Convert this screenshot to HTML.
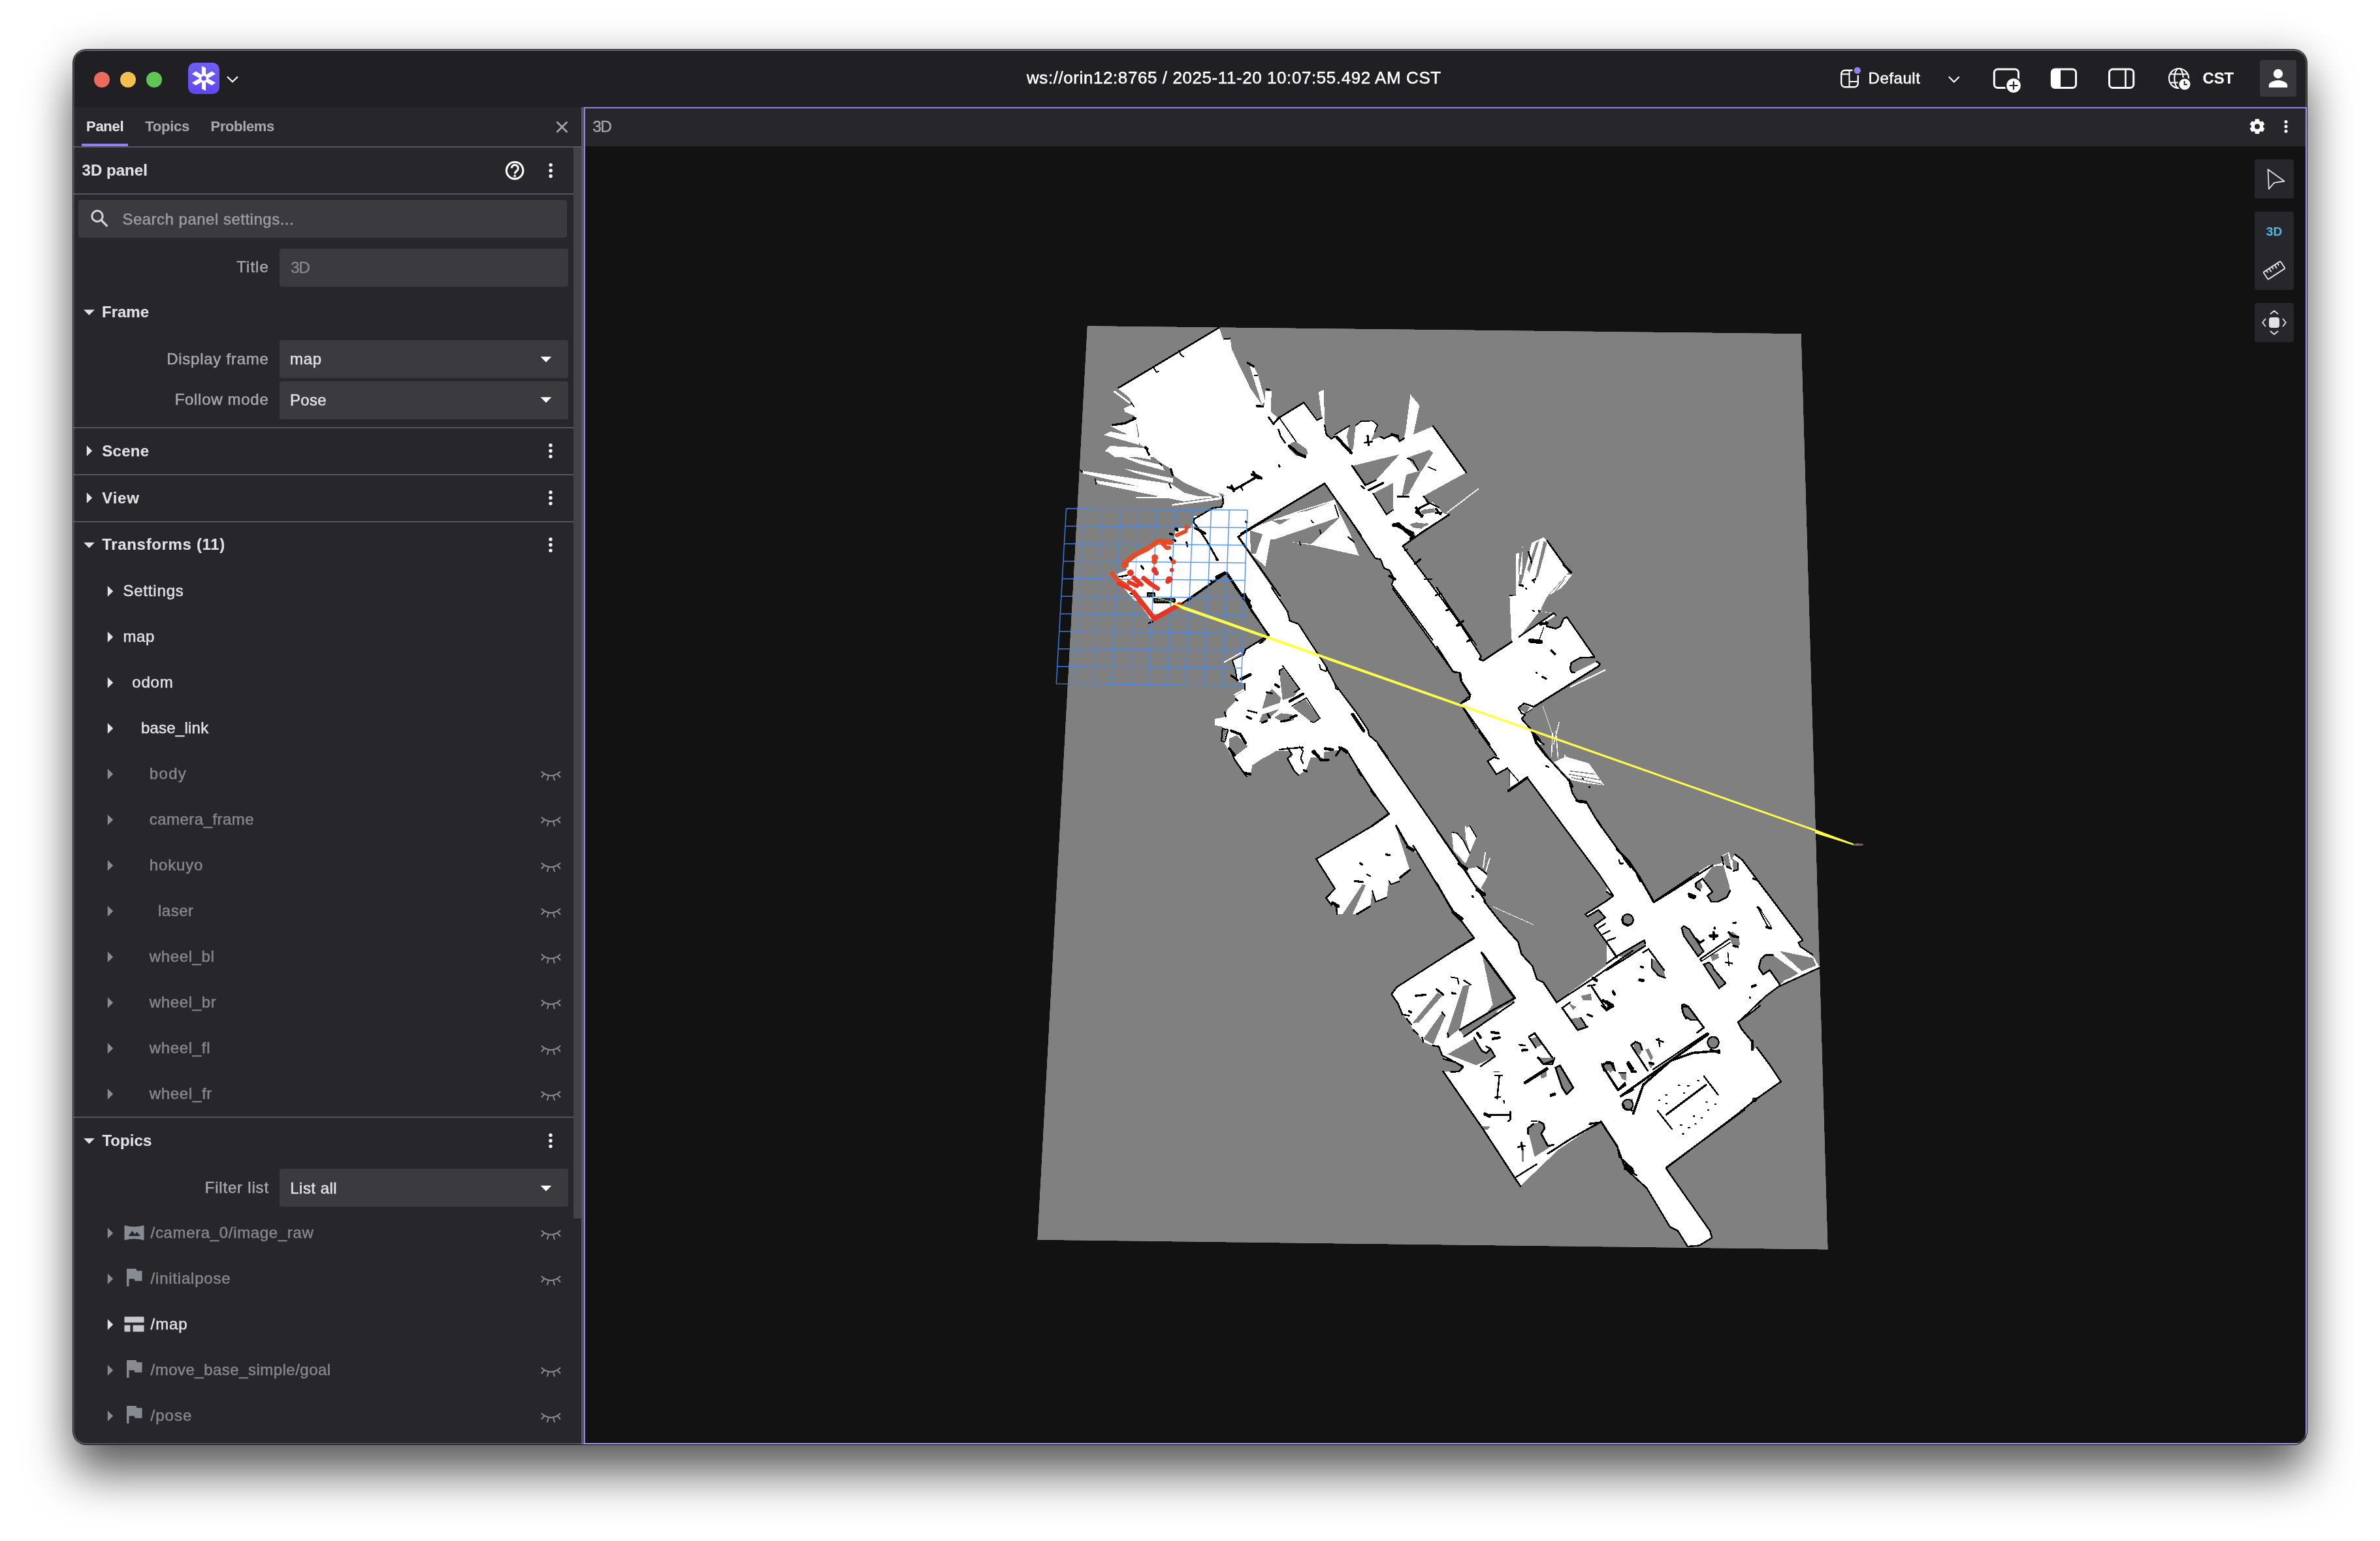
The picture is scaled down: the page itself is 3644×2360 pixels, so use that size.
<!DOCTYPE html>
<html><head><meta charset="utf-8"><title>Foxglove</title>
<style>
html,body{margin:0;padding:0;background:#fff;}
body{width:3644px;height:2360px;position:relative;overflow:hidden;font-family:"Liberation Sans",sans-serif;}
#win{position:absolute;left:112px;top:76px;width:3420px;height:2136px;border-radius:20px;background:#121212;overflow:hidden;}
#shadow{position:absolute;left:112px;top:76px;width:3420px;height:2136px;border-radius:20px;
 box-shadow:0 0 0 1px rgba(0,0,0,0.85),0 46px 70px rgba(0,0,0,0.60),0 0 60px rgba(0,0,0,0.17);}
#rim{position:absolute;left:112px;top:76px;width:3420px;height:2136px;border-radius:20px;box-sizing:border-box;border:2px solid rgba(255,255,255,0.2);border-top-color:rgba(255,255,255,0.3);pointer-events:none;}
.abs{position:absolute;}
.t{position:absolute;white-space:pre;line-height:40px;height:40px;-webkit-text-stroke:0.5px currentColor;}
svg{position:absolute;left:0;top:0;}
</style></head><body>
<div id="shadow"></div>
<div id="win">
<div class="abs" style="left:0;top:0;width:3420px;height:88px;background:#202024"></div>
<div class="abs" style="left:0;top:88px;width:778px;height:2048px;background:#27272b"></div>
<div class="abs" style="left:766px;top:150px;width:12px;height:1640px;background:#434347"></div>
<div class="abs" style="left:778px;top:88px;width:4px;height:2048px;background:#55555e"></div>
<div class="abs" style="left:0;top:148px;width:778px;height:2px;background:#55555e"></div>
<div class="abs" style="left:13px;top:144px;width:71px;height:4px;background:#9480ed"></div>
<div class="abs" style="left:0;top:220px;width:766px;height:2px;background:#55555e"></div>
<div class="abs" style="left:0;top:578px;width:766px;height:2px;background:#55555e"></div>
<div class="abs" style="left:0;top:650px;width:766px;height:2px;background:#55555e"></div>
<div class="abs" style="left:0;top:722px;width:766px;height:2px;background:#55555e"></div>
<div class="abs" style="left:0;top:1634px;width:766px;height:2px;background:#55555e"></div>
<div class="abs" style="left:8px;top:230px;width:748px;height:58px;border-radius:4px;background:#3b3b3f"></div>
<div class="abs" style="left:316px;top:305px;width:442px;height:58px;border-radius:4px;background:#3b3b3f"></div>
<div class="abs" style="left:316px;top:445px;width:442px;height:58px;border-radius:4px;background:#3b3b3f"></div>
<div class="abs" style="left:316px;top:508px;width:442px;height:58px;border-radius:4px;background:#3b3b3f"></div>
<div class="abs" style="left:316px;top:1714px;width:442px;height:58px;border-radius:4px;background:#3b3b3f"></div>
<div class="abs" style="left:782px;top:88px;width:2638px;height:2048px;background:#121212;box-sizing:border-box;border:2px solid #9480ed"></div>
<div class="abs" style="left:784px;top:90px;width:2634px;height:58px;background:#27272b"></div>
</div>
<svg width="3644" height="2360" viewBox="0 0 3644 2360">
<defs><clipPath id="winclip"><rect x="112" y="76" width="3420" height="2136" rx="20"/></clipPath></defs>
<g clip-path="url(#winclip)">
<defs><clipPath id="mapclip"><polygon points="1664.6,499 2757.9,511 2798.8,1913.7 1588.2,1899"/></clipPath></defs>
<g clip-path="url(#mapclip)" shape-rendering="crispEdges">
<polygon points="1664.6,499 2757.9,511 2798.8,1913.7 1588.2,1899" fill="#808080"/>
<polygon points="1866.7,501.6 1872.9,520.6 1883.9,519.6 1885.9,534.5 1898.3,561.8 1907.5,580.0 1914.3,594.4 1932.0,619.7 1960.0,642.4 1960.0,700.0 1760.8,700.0 1755.7,686.3 1745.6,681.2 1743.9,664.4 1738.8,641.6 1736.3,636.5 1722.0,630.6 1721.1,625.2 1734.6,619.2 1728.7,608.7 1712.7,596.1 1712.7,592.7" fill="#fff"/>
<polygon points="1913.4,560.6 1919.7,561.8 1926.4,575.0 1937.1,613.8 1932.0,619.7" fill="#fff"/>
<polygon points="1937.2,599.4 1946.7,598.9 1945.0,638.2 1935.4,638.2" fill="#fff"/>
<polygon points="1738.8,640.8 1722.0,647.8 1703.4,650.5 1700.4,652.9 1726.2,665.2 1689.9,666.1 1743.9,681.2" fill="#fff"/>
<polygon points="1700.0,682.9 1755.7,686.3 1760.8,700.0 1706.8,700.0 1693.3,689.7" fill="#fff"/>
<polygon points="1704.2,599.9 1706.8,598.2 1731.2,616.3 1729.5,618.5" fill="#fff"/>
<polygon points="1900.0,569.3 1913.5,593.7 1925.3,620.7 1937.5,620.7 1937.5,599.6 1946.9,599.6 1945.2,639.3 1949.8,648.6 1958.2,639.3 1996.2,616.5 2016.4,643.5 2024.0,640.1 2018.9,600.5 2026.5,597.1 2028.6,651.1 2030.7,665.4 2038.3,672.7 2044.2,666.3 2066.2,651.9 2062.0,668.0 2067.0,693.3 2072.1,686.5 2075.5,651.9 2083.9,645.2 2101.6,644.4 2109.2,651.1 2099.1,674.7 2113.4,668.8 2119.3,671.7 2131.1,665.9 2142.9,676.1 2149.7,671.3 2152.2,659.5 2159.5,604.2 2173.3,620.7 2164.0,665.4 2194.4,652.8 2245.0,723.6 2185.1,756.5 2180.1,759.9 2186.8,770.9 2193.5,769.2 2202.0,776.8 2208.7,785.2 2218.0,788.6 2171.6,818.1 2169.9,820.0 1900.0,820.0" fill="#fff"/>
<polygon points="1914.3,561.7 1920.2,563.4 1925.3,575.2 1936.3,612.3 1932.9,619.0 1925.3,598.8" fill="#fff"/>
<polyline points="2215.5,785.2 2263.6,748.6" fill="none" stroke="#fff" stroke-width="1.8"/>
<polygon points="1742.2,660.0 1755.7,685.3 1760.8,695.4 1777.6,708.9 1794.5,719.0 1796.2,727.5 1813.1,739.3 1855.2,757.8 1868.7,761.2 1872.1,768.0 1870.4,776.4 1856.9,778.1 1828.2,795.0 1823.2,808.5 1799.6,822.0 1796.2,830.4 1777.6,826.2 1737.1,850.6 1728.7,856.5 1718.6,862.4 1727.0,872.6 1708.5,879.3 1716.9,896.2 1737.1,920.0 1960.0,920.0 1960.0,660.0" fill="#fff"/>
<polygon points="1689.9,665.9 1700.0,660.8 1745.6,670.1 1745.6,678.6" fill="#fff"/>
<polygon points="1691.6,691.2 1699.2,683.6 1759.1,693.7 1762.4,703.9" fill="#fff"/>
<polygon points="1706.8,695.4 1779.3,712.3 1782.7,720.7 1745.6,710.6" fill="#fff"/>
<polygon points="1720.3,717.4 1796.2,732.5 1796.2,739.3 1737.1,724.1" fill="#fff"/>
<polygon points="1654.5,720.7 1657.0,725.0 1799.6,757.8 1813.1,754.5 1792.8,741.0" fill="#fff"/>
<polygon points="1678.1,735.9 1681.5,741.0 1813.1,768.0 1846.8,762.9 1813.1,754.5" fill="#fff"/>
<polygon points="1738.8,760.9 1739.7,762.9 1855.2,763.2 1855.2,759.5" fill="#fff"/>
<polygon points="1793.7,772.2 1795.3,774.7 1869.6,764.9 1868.7,761.2" fill="#fff"/>
<polygon points="1891.2,900.0 1942.7,972.5 1934.2,977.6 1907.2,994.5 1903.9,1002.9 1887.0,1011.3 1892.1,1028.2 1893.7,1043.4 1905.6,1046.8 1906.4,1056.9 1890.4,1066.2 1893.7,1072.1 1878.6,1087.3 1875.2,1098.2 1860.0,1100.8 1860.0,1110.9 1870.1,1112.6 1878.6,1117.6 1873.5,1136.2 1887.0,1160.0 2124.9,1160.0 2108.0,1136.2 2096.2,1126.1 2094.5,1117.6 2077.6,1092.3 2045.6,1050.1 2028.7,1018.1 2000.0,974.2 1988.2,955.7 1974.7,950.6 1971.3,936.3 1946.9,900.0" fill="#fff"/>
<polygon points="2132.5,900.0 2224.4,1028.2 2236.2,1030.7 2237.9,1043.4 2251.4,1063.6 2249.7,1070.4 2236.2,1078.0 2260.0,1117.6 2260.0,987.7 2199.1,900.0" fill="#fff"/>
<polyline points="1873.5,1014.7 1900.5,999.5" fill="none" stroke="#fff" stroke-width="2"/>
<polyline points="1889.5,1064.5 1904.7,1056.1" fill="none" stroke="#fff" stroke-width="2.5"/>
<polygon points="1880.2,1140.0 1883.6,1150.1 1890.4,1163.6 1902.2,1180.5 1908.9,1188.9 1915.7,1182.2 1917.4,1172.1 1947.7,1151.8 1961.2,1147.6 1971.3,1145.1 1978.1,1155.2 1971.3,1161.9 1981.5,1180.5 1988.2,1187.2 2000.0,1178.8 2006.8,1160.2 2016.9,1148.4 2027.0,1163.6 2037.1,1161.9 2045.6,1156.9 2062.4,1150.1 2050.6,1141.7 2050.6,1140.0" fill="#fff"/>
<polygon points="2050.6,1140.0 2062.4,1150.1 2126.6,1246.3 2099.6,1265.7 2015.2,1315.5 2043.9,1361.0 2030.4,1375.3 2038.8,1386.3 2048.9,1388.0 2047.3,1400.0 2260.0,1400.0 2260.0,1359.3 2239.6,1327.3 2109.7,1140.0" fill="#fff"/>
<polygon points="2214.7,1380.0 2228.2,1401.9 2240.0,1413.7 2256.9,1436.5 2228.2,1454.2 2138.8,1511.6 2130.4,1522.6 2140.5,1536.9 2147.2,1553.8 2154.0,1560.5 2164.1,1577.4 2170.9,1584.1 2179.3,1595.9 2192.8,1601.0 2202.9,1602.7 2208.0,1616.2 2240.0,1633.1 2235.0,1640.0 2500.0,1640.0 2500.0,1454.2 2476.2,1466.0 2383.4,1535.2 2363.2,1504.8 2353.1,1499.8 2346.3,1479.5 2329.4,1461.0 2324.4,1442.4 2297.4,1412.1 2272.1,1380.0" fill="#fff"/>
<polygon points="2459.3,1380.0 2427.3,1400.2 2430.7,1403.6 2447.5,1393.5 2457.7,1405.3 2440.8,1417.1 2476.2,1466.0 2500.0,1454.2 2500.0,1380.0" fill="#fff"/>
<polyline points="2285.6,1388.4 2348.0,1416.3" fill="none" stroke="#fff" stroke-width="1"/>
<polyline points="2390.2,1531.8 2471.2,1471.9" fill="none" stroke="#fff" stroke-width="2"/>
<polygon points="2200.0,900.2 2267.5,1004.8 2265.0,1009.9 2270.9,1011.6 2314.7,982.9 2311.3,912.1 2320.6,911.2 2321.5,880.0 2407.5,880.0 2394.0,896.9 2356.9,935.7 2378.8,939.0 2382.2,942.4 2367.0,952.5 2368.7,959.3 2382.2,962.7 2388.9,959.3 2394.0,947.5 2399.1,945.0 2441.2,1005.7 2419.3,1007.4 2405.8,1015.0 2405.0,1028.5 2410.9,1030.1 2444.6,1013.3 2449.7,1016.7 2448.0,1020.0 2348.5,1082.4 2343.4,1086.7 2335.0,1094.3 2329.9,1101.0 2343.4,1116.2 2348.5,1128.0 2363.6,1140.0 2281.0,1140.0 2236.3,1077.4 2250.6,1065.6 2236.3,1042.0 2234.6,1030.1 2225.3,1029.3 2200.0,989.7" fill="#fff"/>
<polyline points="2404.1,1052.1 2458.1,1025.9" fill="none" stroke="#fff" stroke-width="2.4"/>
<polyline points="2378.8,1140.0 2387.3,1106.1" fill="none" stroke="#fff" stroke-width="1.4"/>
<polyline points="2362.0,1080.8 2378.8,1129.7" fill="none" stroke="#fff" stroke-width="0.8"/>
<polygon points="2264.1,1120.0 2291.1,1157.1 2294.5,1162.2 2287.7,1159.6 2277.6,1165.6 2291.1,1185.8 2308.0,1176.5 2311.3,1180.7 2311.3,1206.0 2338.3,1190.9 2449.7,1341.0 2469.9,1371.4 2459.8,1380.0 2530.7,1380.0 2510.4,1342.7 2486.8,1314.0 2446.3,1258.3 2429.4,1229.7 2415.9,1228.0 2407.5,1214.5 2402.4,1195.9 2368.7,1158.8 2351.8,1136.9 2346.8,1120.0" fill="#fff"/>
<polygon points="2378.8,1167.2 2397.4,1158.8 2432.8,1168.9 2456.4,1202.7 2427.8,1199.3 2404.1,1194.2" fill="#fff"/>
<polygon points="2600.0,1337.6 2535.7,1380.0 2600.0,1380.0" fill="#fff"/>
<polygon points="2200.0,1271.8 2200.0,1380.0 2274.2,1380.0 2238.8,1327.5" fill="#fff"/>
<polygon points="2222.8,1274.4 2231.2,1276.1 2240.5,1287.0 2250.6,1307.3 2243.9,1322.4 2225.3,1302.2" fill="#fff"/>
<polygon points="2243.9,1268.5 2250.6,1265.1 2260.7,1282.0 2250.6,1305.6 2245.6,1288.7" fill="#fff"/>
<polygon points="2245.6,1330.9 2264.1,1327.5 2277.6,1342.7 2267.5,1359.6 2274.2,1368.0 2255.7,1351.1" fill="#fff"/>
<polyline points="2377.1,1121.7 2375.5,1158.8" fill="none" stroke="#fff" stroke-width="1.5"/>
<polyline points="2382.2,1120.0 2385.6,1162.2" fill="none" stroke="#fff" stroke-width="1.5"/>
<polyline points="2274.2,1304.7 2270.9,1329.2" fill="none" stroke="#fff" stroke-width="2"/>
<polyline points="2281.0,1314.0 2274.2,1337.6" fill="none" stroke="#fff" stroke-width="2"/>
<polyline points="2243.9,1265.1 2244.7,1287.0" fill="none" stroke="#fff" stroke-width="1.5"/>
<polyline points="2395.7,1156.3 2397.4,1165.6" fill="none" stroke="#fff" stroke-width="2"/>
<polygon points="2460.0,1300.0 2475.2,1300.0 2493.7,1318.6 2510.6,1343.9 2532.5,1381.8 2561.2,1364.1 2622.0,1325.3 2635.5,1321.9 2637.1,1310.1 2647.3,1305.1 2650.6,1316.9 2656.5,1308.4 2667.5,1316.9 2760.3,1440.0 2753.5,1443.4 2756.9,1450.1 2777.2,1466.2 2785.6,1480.5 2785.6,1483.0 2723.2,1510.9 2702.9,1526.1 2667.5,1560.0 2460.0,1560.0" fill="#fff"/>
<polyline points="2561.2,1362.1 2618.6,1325.0" fill="none" stroke="#fff" stroke-width="2"/>
<polygon points="2060.0,720.0 2243.9,720.0 2245.6,723.4 2184.8,756.3 2179.8,760.5 2188.2,770.6 2203.4,785.8 2218.6,788.3 2171.3,819.5 2147.7,836.4 2254.0,980.0 2193.3,980.0 2130.9,895.5 2134.2,885.3 2127.5,873.5 2119.0,870.1 2114.0,856.7 2105.6,855.0 2060.0,785.0" fill="#fff"/>
<polygon points="2311.4,912.3 2320.6,911.5 2321.5,848.2 2325.7,846.5 2324.9,888.7 2331.6,836.4 2329.9,892.1 2345.1,831.3 2363.7,822.9 2368.7,828.0 2402.5,875.2 2356.9,937.6 2328.2,973.1 2324.9,976.4 2314.7,980.0 2313.1,956.2" fill="#fff"/>
<polygon points="2209.7,1620.0 2228.2,1626.7 2240.0,1634.3 2233.3,1641.1 2209.7,1641.1 2268.7,1726.3 2319.3,1803.9 2327.8,1816.5 2353.1,1792.1 2386.8,1760.0 2450.9,1717.8 2476.2,1755.0 2479.6,1771.8 2500.0,1790.4 2500.0,1620.0" fill="#fff"/>
<polygon points="2440.0,1540.0 2694.7,1540.0 2684.6,1548.4 2661.0,1565.3 2666.1,1575.4 2682.9,1595.7 2682.9,1607.5 2689.7,1604.1 2709.9,1631.1 2726.8,1656.4 2686.3,1685.1 2659.3,1707.0 2551.3,1788.8 2558.1,1800.0 2505.8,1800.0 2488.9,1789.7 2475.4,1754.3 2451.8,1718.0 2440.0,1724.7" fill="#fff"/>
<polygon points="2451.0,1717.9 2476.4,1756.7 2488.4,1789.6 2521.2,1819.4 2539.1,1849.3 2557.0,1879.1 2569.0,1885.1 2583.9,1909.0 2601.8,1907.5 2621.2,1895.5 2618.2,1885.1 2551.0,1789.6 2670.4,1700.0 2451.0,1700.0" fill="#fff"/>
<polygon points="1828.3,790.0 1828.3,801.4 1823.2,809.0 1800.4,809.0 1796.7,828.0 1778.9,826.7 1735.9,852.0 1728.3,857.1 1718.2,863.4 1727.1,873.5 1710.6,880.5 1730.9,903.9 1761.2,948.2 1770.1,950.1 1808.0,925.4 1875.1,878.6 1881.4,881.1 1911.8,926.7 1944.7,973.5 1932.0,985.0 1960.0,985.0 1960.0,916.5 1896.6,821.6 1951.0,790.0" fill="#fff"/>
<polygon points="2070.4,713.5 2142.9,695.8 2106.7,735.5 2090.6,743.0" fill="#808080"/>
<polygon points="2154.7,700.9 2188.5,689.1 2194.4,693.3 2176.7,721.1 2169.9,719.4" fill="#808080"/>
<polygon points="2153.1,727.0 2176.7,720.3 2156.4,756.5 2146.3,759.9" fill="#808080"/>
<polygon points="2102.4,755.7 2132.8,739.7 2132.8,779.3 2122.7,787.8" fill="#808080"/>
<polygon points="1976.8,678.1 1984.4,676.4 2001.2,688.2 2002.1,695.0 1996.2,700.0 1984.4,697.5 1974.2,688.2" fill="#808080"/>
<polygon points="2158.1,802.9 2186.8,801.2 2176.7,809.7 2163.2,808.0" fill="#808080"/>
<polygon points="2176.7,781.0 2196.9,778.0 2186.8,785.2" fill="#808080"/>
<polygon points="2028.2,740.5 1900.0,817.3 1894.9,823.2 1950.6,904.2 2136.2,904.2 2083.9,820.0" fill="#808080"/>
<polygon points="1895.7,822.0 1960.0,782.3 1960.0,913.1" fill="#808080"/>
<polygon points="1818.1,920.0 1877.2,877.6 1905.8,920.0" fill="#808080"/>
<polygon points="1866.2,755.3 1872.1,756.2 1875.5,759.5 1870.4,761.2" fill="#808080"/>
<polygon points="1958.7,1028.2 1963.8,1023.2 1989.9,1055.2 1981.5,1066.2 1963.8,1072.1" fill="#808080"/>
<polygon points="1939.3,1062.0 1947.7,1055.2 1961.2,1068.7 1959.5,1076.3 1932.5,1085.6" fill="#808080"/>
<polygon points="1978.9,1083.0 1998.3,1070.4 2021.1,1099.9 2011.8,1106.7 2006.8,1105.0" fill="#808080"/>
<polygon points="1927.5,1106.7 1932.5,1094.0 1959.5,1085.6 1947.7,1095.7 1939.3,1104.1" fill="#808080"/>
<polygon points="1951.1,1099.1 1961.2,1092.3 1978.1,1094.0 1981.5,1102.4 1966.3,1106.7" fill="#808080"/>
<polygon points="1881.9,1131.1 1893.7,1126.1 1903.9,1136.2 1910.6,1142.9 1888.7,1160.0 1881.9,1146.3" fill="#808080"/>
<polygon points="1936.8,1160.0 1954.5,1149.7 1974.7,1149.7 1978.1,1160.0" fill="#808080"/>
<polygon points="2027.0,1160.0 2028.7,1151.4 2055.7,1148.0 2067.5,1160.0" fill="#808080"/>
<polygon points="2138.4,1268.2 2156.9,1298.6 2172.1,1308.7 2227.8,1400.0 2077.6,1400.0 2097.9,1388.0 2101.2,1364.4 2106.3,1381.2 2123.2,1374.5 2126.6,1349.2 2129.9,1354.3 2141.7,1350.0 2143.4,1344.1 2158.6,1332.3 2140.1,1275.0" fill="#808080"/>
<polygon points="2055.7,1400.0 2086.1,1354.3 2091.1,1355.9 2070.9,1400.0" fill="#808080"/>
<polygon points="2027.0,1151.8 2038.8,1151.8 2038.8,1161.9 2027.0,1161.9" fill="#808080"/>
<polygon points="2268.7,1459.3 2319.3,1526.8 2317.6,1533.5 2290.6,1548.7 2235.0,1579.1 2235.0,1575.7 2277.1,1550.4 2285.6,1538.6" fill="#808080"/>
<polygon points="2240.0,1509.9 2250.1,1508.2 2235.0,1575.7 2214.7,1590.9 2216.4,1580.8" fill="#808080"/>
<polygon points="2201.2,1520.0 2208.0,1525.1 2172.5,1565.6 2162.4,1567.3" fill="#808080"/>
<polygon points="2208.0,1550.4 2213.0,1555.5 2194.5,1599.3 2179.3,1590.9" fill="#808080"/>
<polygon points="2216.4,1614.5 2256.9,1590.9 2273.8,1612.8 2282.2,1606.1 2288.9,1617.9 2260.3,1631.4" fill="#808080"/>
<polygon points="2235.0,1577.4 2290.6,1547.0 2294.0,1553.8 2241.7,1587.5" fill="#808080"/>
<polygon points="2420.5,1525.1 2435.7,1521.7 2437.4,1531.8 2423.9,1531.8" fill="#808080"/>
<polygon points="2402.0,1536.9 2413.8,1542.0 2408.7,1547.0" fill="#808080"/>
<polygon points="2403.7,1560.5 2420.5,1558.0 2429.0,1570.6 2415.5,1577.4" fill="#808080"/>
<polygon points="2342.9,1590.9 2353.1,1587.5 2363.2,1599.3 2351.4,1604.4" fill="#808080"/>
<polygon points="2356.4,1619.6 2376.7,1622.9 2366.6,1631.4" fill="#808080"/>
<polygon points="2456.0,1631.4 2469.5,1629.7 2471.2,1640.0 2454.3,1640.0" fill="#808080"/>
<polygon points="2484.6,1403.6 2489.7,1400.2 2496.5,1401.1 2500.0,1405.3 2500.0,1412.1 2495.6,1415.8 2488.9,1415.4 2484.6,1411.2" fill="#808080"/>
<polygon points="2328.2,973.6 2356.9,936.5 2376.3,939.0" fill="#808080"/>
<polygon points="2326.5,1085.0 2333.3,1079.1 2343.4,1083.3 2335.0,1092.6" fill="#808080"/>
<polygon points="2333.3,880.0 2328.2,896.9 2324.8,896.9 2326.5,880.0" fill="#808080"/>
<polygon points="2368.7,913.7 2394.0,898.6 2358.6,934.0" fill="#808080"/>
<polyline points="2402.4,1185.8 2449.7,1194.2" fill="none" stroke="#808080" stroke-width="1.5"/>
<polyline points="2405.8,1190.9 2453.1,1201.0" fill="none" stroke="#808080" stroke-width="1.5"/>
<polyline points="2404.1,1180.7 2442.9,1185.8" fill="none" stroke="#808080" stroke-width="1.5"/>
<polygon points="2723.2,1456.1 2775.5,1467.0 2780.5,1478.8 2758.6,1487.3" fill="#808080"/>
<polygon points="2608.5,1344.7 2622.0,1327.0 2638.8,1325.3 2648.1,1357.4 2648.9,1365.0 2643.0,1375.1 2629.5,1381.8 2620.3,1381.8 2614.4,1371.7 2622.8,1365.8" fill="#808080"/>
<polygon points="2597.5,1352.3 2603.4,1348.9 2606.8,1357.4 2603.4,1363.3 2598.3,1360.7" fill="#808080"/>
<polygon points="2500.8,1408.8 2500.0,1412.6 2497.5,1415.7 2494.0,1417.4 2490.1,1417.4 2486.6,1415.7 2484.2,1412.6 2483.3,1408.8 2484.2,1405.0 2486.6,1402.0 2490.1,1400.3 2494.0,1400.3 2497.5,1402.0 2500.0,1405.0" fill="#808080"/>
<polygon points="2574.7,1421.5 2578.1,1418.1 2586.5,1423.2 2608.5,1456.9 2600.0,1464.5 2578.1,1433.3" fill="#808080"/>
<polygon points="2646.4,1429.9 2652.3,1426.5 2662.4,1435.0 2664.1,1446.8 2657.4,1451.8 2650.6,1443.4" fill="#808080"/>
<polygon points="2618.6,1462.0 2630.4,1460.3 2632.1,1467.0 2622.0,1472.1" fill="#808080"/>
<polygon points="2608.5,1477.1 2616.9,1473.8 2642.2,1505.8 2632.1,1513.4" fill="#808080"/>
<polygon points="2696.2,1468.7 2702.9,1462.8 2714.7,1462.8 2753.5,1490.6 2724.9,1507.5 2709.7,1485.6 2699.6,1492.3 2692.8,1482.2" fill="#808080"/>
<polygon points="2529.2,1468.7 2534.2,1470.4 2547.7,1485.6 2549.4,1497.4 2539.3,1494.0 2529.2,1482.2" fill="#808080"/>
<polygon points="2460.0,1365.8 2469.3,1372.5 2460.0,1379.3" fill="#808080"/>
<polygon points="2460.0,1532.8 2470.1,1539.6 2460.0,1548.0" fill="#808080"/>
<polygon points="2574.7,1539.6 2584.8,1541.2 2598.3,1560.0 2581.5,1560.0" fill="#808080"/>
<polygon points="2476.9,1463.6 2517.4,1441.7 2519.0,1448.5 2490.4,1467.0" fill="#808080"/>
<polygon points="2637.1,1311.8 2645.6,1306.7 2650.6,1330.4 2643.9,1330.4" fill="#808080"/>
<polygon points="2652.3,1315.2 2660.8,1320.2 2659.1,1333.7 2654.0,1333.7" fill="#808080"/>
<polygon points="2338.4,871.8 2351.9,831.3 2356.9,828.0 2341.7,876.9" fill="#808080"/>
<polygon points="2350.2,887.0 2363.7,828.0 2368.7,831.3 2355.2,882.0" fill="#808080"/>
<polygon points="2159.5,802.7 2168.0,800.1 2188.2,802.7 2178.1,807.7 2169.7,809.4" fill="#808080"/>
<polygon points="2154.5,811.1 2164.6,814.5 2168.0,821.2 2161.2,822.9" fill="#808080"/>
<polygon points="2174.7,782.4 2195.0,779.0 2198.3,784.1 2178.1,787.5" fill="#808080"/>
<polyline points="2362.0,930.9 2395.7,887.0" fill="none" stroke="#808080" stroke-width="1.5"/>
<polyline points="2370.4,912.3 2397.4,882.0" fill="none" stroke="#808080" stroke-width="1"/>
<polygon points="2339.6,1728.0 2348.0,1721.2 2359.8,1717.8 2364.9,1728.0 2359.8,1736.4 2369.9,1755.0 2378.4,1753.3 2349.7,1771.8 2341.2,1738.1" fill="#808080"/>
<polygon points="2270.4,1725.4 2282.2,1724.6 2277.1,1730.5 2270.4,1729.7" fill="#808080"/>
<polygon points="2329.4,1760.0 2332.8,1760.0 2332.8,1778.6 2330.3,1778.6" fill="#808080"/>
<polygon points="2358.1,1620.0 2378.4,1620.0 2376.7,1630.1 2363.2,1630.1" fill="#808080"/>
<polygon points="2358.1,1640.2 2368.2,1636.9 2368.2,1648.7 2359.8,1652.1" fill="#808080"/>
<polygon points="2381.7,1635.2 2388.5,1631.8 2408.7,1665.6 2398.6,1675.7 2391.9,1665.6" fill="#808080"/>
<polygon points="2456.0,1630.1 2464.4,1626.7 2471.2,1636.9 2462.7,1640.2" fill="#808080"/>
<polygon points="2479.6,1643.6 2489.7,1641.9 2489.7,1653.7 2483.0,1652.1" fill="#808080"/>
<polygon points="2486.3,1687.5 2500.0,1682.4 2500.0,1699.3 2489.7,1699.3" fill="#808080"/>
<polygon points="2576.7,1543.4 2585.1,1543.4 2596.9,1561.9 2585.1,1560.2 2578.3,1553.5" fill="#808080"/>
<polygon points="2631.8,1596.5 2630.9,1600.3 2628.5,1603.4 2625.0,1605.1 2621.1,1605.1 2617.6,1603.4 2615.1,1600.3 2614.3,1596.5 2615.1,1592.7 2617.6,1589.7 2621.1,1588.0 2625.0,1588.0 2628.5,1589.7 2630.9,1592.7" fill="#808080"/>
<polygon points="2500.7,1599.0 2509.2,1597.4 2514.2,1607.5 2510.9,1615.9 2504.1,1610.9" fill="#808080"/>
<polygon points="2519.3,1607.5 2524.4,1605.8 2531.1,1619.3 2527.7,1624.4" fill="#808080"/>
<polygon points="2456.9,1631.1 2465.3,1629.4 2470.4,1637.8 2465.3,1642.9" fill="#808080"/>
<polygon points="2480.5,1644.6 2488.9,1642.9 2490.6,1654.7 2483.9,1653.0" fill="#808080"/>
<polygon points="2500.4,1691.8 2499.6,1695.3 2497.3,1698.2 2494.1,1699.7 2490.5,1699.7 2487.2,1698.2 2485.0,1695.3 2484.2,1691.8 2485.0,1688.3 2487.2,1685.5 2490.5,1683.9 2494.1,1683.9 2497.3,1685.5 2499.6,1688.3" fill="#808080"/>
<polygon points="2524.4,1629.4 2531.1,1631.1 2527.7,1636.2" fill="#808080"/>
<polygon points="1877.0,877.9 1808.0,926.0 1770.1,950.1 1763.8,953.2 1748.6,985.0 1933.3,985.0 1944.1,973.5 1882.7,881.1" fill="#808080"/>
<polygon points="1898.8,822.7 1912.2,809.9 1948.1,796.7 1983.9,783.9 2043.6,765.1 2052.5,788.4 2067.5,818.2 2080.9,851.0 2007.8,834.6 1945.1,825.7 1937.6,867.5 1918.2,851.0" fill="#fff"/>
<polygon points="2720.6,1456.9 2723.2,1454.9 2756.9,1485.6 2754.4,1487.6" fill="#fff"/>
<polygon points="2729.9,1502.4 2785.6,1479.2 2785.6,1483.0 2733.3,1506.7" fill="#fff"/>
<polygon points="1948.1,797.3 1974.9,794.3 1960.0,803.3" fill="#808080"/>
<polygon points="1913.7,812.2 1933.1,818.2 1922.7,848.1 1915.2,848.1" fill="#808080"/>
<polygon points="1983.9,785.4 2037.6,769.0 2001.8,782.4" fill="#808080"/>
<polygon points="1948.1,827.2 2052.5,791.3 2007.8,833.1" fill="#808080"/>
<polyline points="1712.7,593.9 1866.7,501.6" fill="none" stroke="#000" stroke-width="2.62" stroke-linejoin="round" stroke-linecap="round"/>
<polyline points="1735.5,639.9 1738.8,640.8 1722.0,648.4 1703.4,650.9" fill="none" stroke="#000" stroke-width="3.28" stroke-linejoin="round" stroke-linecap="round"/>
<polyline points="1874.6,519.3 1883.1,518.4" fill="none" stroke="#000" stroke-width="2.05" stroke-linejoin="round" stroke-linecap="round"/>
<polyline points="1910.1,555.6 1919.3,561.1" fill="none" stroke="#000" stroke-width="3.28" stroke-linejoin="round" stroke-linecap="round"/>
<polyline points="1921.0,575.0 1925.2,575.0" fill="none" stroke="#000" stroke-width="2.46" stroke-linejoin="round" stroke-linecap="round"/>
<polyline points="1924.4,621.9 1933.7,622.5" fill="none" stroke="#000" stroke-width="3.69" stroke-linejoin="round" stroke-linecap="round"/>
<polyline points="1938.7,596.1 1943.8,596.9" fill="none" stroke="#000" stroke-width="2.46" stroke-linejoin="round" stroke-linecap="round"/>
<polyline points="1942.6,639.1 1949.7,649.5 1955.6,642.4 1960.0,639.1" fill="none" stroke="#000" stroke-width="2.87" stroke-linejoin="round" stroke-linecap="round"/>
<polyline points="1805.0,537.0 1808.0,543.2 1812.2,546.3" fill="none" stroke="#000" stroke-width="2.05" stroke-linejoin="round" stroke-linecap="round"/>
<polyline points="1766.7,564.0 1770.9,569.9 1773.9,568.6" fill="none" stroke="#000" stroke-width="2.05" stroke-linejoin="round" stroke-linecap="round"/>
<polyline points="1732.1,616.3 1736.3,623.0" fill="none" stroke="#000" stroke-width="1.64" stroke-linejoin="round" stroke-linecap="round"/>
<polyline points="1754.0,685.5 1759.1,696.4" fill="none" stroke="#000" stroke-width="2.46" stroke-linejoin="round" stroke-linecap="round"/>
<polyline points="1959.0,639.3 1996.2,616.5" fill="none" stroke="#000" stroke-width="2.62" stroke-linejoin="round" stroke-linecap="round"/>
<polyline points="1996.2,616.5 2016.4,643.5 2024.0,640.1" fill="none" stroke="#000" stroke-width="2.13" stroke-linejoin="round" stroke-linecap="round"/>
<polyline points="1943.0,639.3 1949.8,649.4 1958.2,639.3" fill="none" stroke="#000" stroke-width="2.62" stroke-linejoin="round" stroke-linecap="round"/>
<polyline points="1959.0,640.1 1984.4,676.4" fill="none" stroke="#000" stroke-width="1.80" stroke-linejoin="round" stroke-linecap="round"/>
<polyline points="2028.2,651.1 2030.7,665.4 2038.3,672.2 2044.2,668.0" fill="none" stroke="#000" stroke-width="2.30" stroke-linejoin="round" stroke-linecap="round"/>
<polyline points="2044.2,665.4 2066.2,651.9" fill="none" stroke="#000" stroke-width="2.13" stroke-linejoin="round" stroke-linecap="round"/>
<polyline points="2046.8,669.7 2068.7,693.3" fill="none" stroke="#000" stroke-width="4.92" stroke-linejoin="round" stroke-linecap="round"/>
<polyline points="2075.5,651.9 2083.9,645.2 2101.6,644.4 2109.2,651.1 2105.0,661.2" fill="none" stroke="#000" stroke-width="1.80" stroke-linejoin="round" stroke-linecap="round"/>
<polyline points="2094.0,668.0 2095.7,681.5" fill="none" stroke="#000" stroke-width="3.28" stroke-linejoin="round" stroke-linecap="round"/>
<polyline points="2088.9,678.1 2100.8,676.4" fill="none" stroke="#000" stroke-width="2.46" stroke-linejoin="round" stroke-linecap="round"/>
<polyline points="2113.4,668.8 2119.3,671.7 2131.1,665.9 2140.4,669.7 2142.9,676.1 2149.7,671.3" fill="none" stroke="#000" stroke-width="2.46" stroke-linejoin="round" stroke-linecap="round"/>
<polyline points="2131.1,665.4 2140.4,668.0" fill="none" stroke="#000" stroke-width="4.10" stroke-linejoin="round" stroke-linecap="round"/>
<polyline points="2194.4,652.8 2245.0,723.6" fill="none" stroke="#000" stroke-width="2.62" stroke-linejoin="round" stroke-linecap="round"/>
<polyline points="2070.4,713.5 2090.6,743.0" fill="none" stroke="#000" stroke-width="2.95" stroke-linejoin="round" stroke-linecap="round"/>
<polyline points="2090.6,743.0 2106.7,735.5" fill="none" stroke="#000" stroke-width="2.46" stroke-linejoin="round" stroke-linecap="round"/>
<polyline points="2095.7,750.6 2117.6,739.7" fill="none" stroke="#000" stroke-width="3.44" stroke-linejoin="round" stroke-linecap="round"/>
<polyline points="2102.4,755.7 2122.7,787.8 2132.8,781.0" fill="none" stroke="#000" stroke-width="2.13" stroke-linejoin="round" stroke-linecap="round"/>
<polyline points="2154.7,701.7 2163.2,705.1 2171.6,720.3" fill="none" stroke="#000" stroke-width="2.13" stroke-linejoin="round" stroke-linecap="round"/>
<polyline points="2140.4,760.8 2156.4,760.8" fill="none" stroke="#000" stroke-width="3.28" stroke-linejoin="round" stroke-linecap="round"/>
<polyline points="2180.1,759.9 2186.8,770.9" fill="none" stroke="#000" stroke-width="2.13" stroke-linejoin="round" stroke-linecap="round"/>
<polyline points="1900.0,745.6 1921.9,730.7" fill="none" stroke="#000" stroke-width="2.62" stroke-linejoin="round" stroke-linecap="round"/>
<polyline points="1916.9,727.0 1925.3,728.7 1931.2,732.1" fill="none" stroke="#000" stroke-width="4.10" stroke-linejoin="round" stroke-linecap="round"/>
<polyline points="2218.0,788.6 2173.3,817.3" fill="none" stroke="#000" stroke-width="2.13" stroke-linejoin="round" stroke-linecap="round"/>
<polyline points="2168.2,777.6 2176.7,791.1" fill="none" stroke="#000" stroke-width="4.10" stroke-linejoin="round" stroke-linecap="round"/>
<polyline points="2134.5,802.9 2163.2,816.4" fill="none" stroke="#000" stroke-width="4.51" stroke-linejoin="round" stroke-linecap="round"/>
<polyline points="1957.4,657.8 1960.7,668.0 1967.5,678.1" fill="none" stroke="#000" stroke-width="2.46" stroke-linejoin="round" stroke-linecap="round"/>
<polyline points="1974.2,683.2 1987.7,695.0 1997.8,699.2" fill="none" stroke="#000" stroke-width="4.92" stroke-linejoin="round" stroke-linecap="round"/>
<polyline points="1958.2,712.7 1959.0,714.4" fill="none" stroke="#000" stroke-width="3.28" stroke-linejoin="round" stroke-linecap="round"/>
<polyline points="2083.9,743.9 2088.9,748.1" fill="none" stroke="#000" stroke-width="2.46" stroke-linejoin="round" stroke-linecap="round"/>
<polyline points="2186.8,715.2 2198.6,720.3" fill="none" stroke="#000" stroke-width="1.64" stroke-linejoin="round" stroke-linecap="round"/>
<polyline points="2198.6,779.3 2205.4,787.8" fill="none" stroke="#000" stroke-width="3.28" stroke-linejoin="round" stroke-linecap="round"/>
<polyline points="2028.2,740.5 1900.0,817.3" fill="none" stroke="#000" stroke-width="2.79" stroke-linejoin="round" stroke-linecap="round"/>
<polyline points="2028.2,740.5 2083.9,820.0" fill="none" stroke="#000" stroke-width="2.46" stroke-linejoin="round" stroke-linecap="round"/>
<polyline points="1872.1,761.2 1872.9,769.7 1870.4,776.4 1856.9,778.1 1828.2,795.0 1827.4,800.0 1831.6,805.1" fill="none" stroke="#000" stroke-width="2.46" stroke-linejoin="round" stroke-linecap="round"/>
<polyline points="1831.6,805.1 1846.8,827.0 1863.7,856.5" fill="none" stroke="#000" stroke-width="2.79" stroke-linejoin="round" stroke-linecap="round"/>
<polyline points="1829.9,808.5 1845.1,816.9" fill="none" stroke="#000" stroke-width="4.10" stroke-linejoin="round" stroke-linecap="round"/>
<polyline points="1862.8,856.5 1864.5,857.4" fill="none" stroke="#000" stroke-width="4.10" stroke-linejoin="round" stroke-linecap="round"/>
<polyline points="1895.7,822.0 1960.0,782.3" fill="none" stroke="#000" stroke-width="2.62" stroke-linejoin="round" stroke-linecap="round"/>
<polyline points="1895.7,822.0 1960.0,913.1" fill="none" stroke="#000" stroke-width="2.79" stroke-linejoin="round" stroke-linecap="round"/>
<polyline points="1818.1,920.0 1877.2,877.6 1905.8,920.0" fill="none" stroke="#000" stroke-width="2.79" stroke-linejoin="round" stroke-linecap="round"/>
<polyline points="1879.7,746.0 1890.7,749.4 1921.0,732.5" fill="none" stroke="#000" stroke-width="3.28" stroke-linejoin="round" stroke-linecap="round"/>
<polyline points="1919.3,723.3 1922.7,730.9 1931.2,732.5" fill="none" stroke="#000" stroke-width="4.10" stroke-linejoin="round" stroke-linecap="round"/>
<polyline points="1885.6,744.4 1889.0,751.9" fill="none" stroke="#000" stroke-width="4.10" stroke-linejoin="round" stroke-linecap="round"/>
<polyline points="1899.1,744.4 1902.5,750.3" fill="none" stroke="#000" stroke-width="2.46" stroke-linejoin="round" stroke-linecap="round"/>
<polyline points="1754.0,685.3 1756.5,687.8" fill="none" stroke="#000" stroke-width="4.10" stroke-linejoin="round" stroke-linecap="round"/>
<polyline points="1758.2,693.7 1759.9,696.3" fill="none" stroke="#000" stroke-width="2.46" stroke-linejoin="round" stroke-linecap="round"/>
<polyline points="1792.8,719.0 1795.3,727.5" fill="none" stroke="#000" stroke-width="3.28" stroke-linejoin="round" stroke-linecap="round"/>
<polyline points="1775.9,709.8 1778.5,712.3" fill="none" stroke="#000" stroke-width="2.46" stroke-linejoin="round" stroke-linecap="round"/>
<polyline points="1790.3,741.0 1792.8,746.9" fill="none" stroke="#000" stroke-width="2.05" stroke-linejoin="round" stroke-linecap="round"/>
<polyline points="1676.4,732.5 1678.1,741.0" fill="none" stroke="#000" stroke-width="1.64" stroke-linejoin="round" stroke-linecap="round"/>
<polyline points="1654.5,720.7 1657.0,722.4" fill="none" stroke="#000" stroke-width="2.46" stroke-linejoin="round" stroke-linecap="round"/>
<polyline points="1797.9,827.0 1799.6,828.7" fill="none" stroke="#000" stroke-width="3.28" stroke-linejoin="round" stroke-linecap="round"/>
<polyline points="1800.4,808.5 1802.9,811.0" fill="none" stroke="#000" stroke-width="3.28" stroke-linejoin="round" stroke-linecap="round"/>
<polyline points="1792.8,816.9 1796.2,819.4" fill="none" stroke="#000" stroke-width="2.46" stroke-linejoin="round" stroke-linecap="round"/>
<polyline points="1816.4,830.4 1818.1,837.1" fill="none" stroke="#000" stroke-width="2.46" stroke-linejoin="round" stroke-linecap="round"/>
<polyline points="1792.0,854.0 1793.7,858.2" fill="none" stroke="#000" stroke-width="3.28" stroke-linejoin="round" stroke-linecap="round"/>
<polyline points="1747.3,866.7 1750.6,870.9" fill="none" stroke="#000" stroke-width="2.46" stroke-linejoin="round" stroke-linecap="round"/>
<polyline points="1907.5,798.3 1908.9,800.4" fill="none" stroke="#000" stroke-width="2.46" stroke-linejoin="round" stroke-linecap="round"/>
<polyline points="1853.5,889.4 1855.2,890.8" fill="none" stroke="#000" stroke-width="2.46" stroke-linejoin="round" stroke-linecap="round"/>
<polyline points="1728.7,856.5 1737.1,852.3" fill="none" stroke="#000" stroke-width="2.46" stroke-linejoin="round" stroke-linecap="round"/>
<polyline points="1713.5,882.7 1718.6,883.5" fill="none" stroke="#000" stroke-width="2.05" stroke-linejoin="round" stroke-linecap="round"/>
<polyline points="1904.2,913.1 1912.6,920.0" fill="none" stroke="#000" stroke-width="4.92" stroke-linejoin="round" stroke-linecap="round"/>
<polyline points="1989.9,830.1 1991.3,834.6" fill="none" stroke="#000" stroke-width="2.05" stroke-linejoin="round" stroke-linecap="round"/>
<polyline points="2007.8,797.3 2010.7,800.3" fill="none" stroke="#000" stroke-width="2.05" stroke-linejoin="round" stroke-linecap="round"/>
<polyline points="2021.2,812.2 2022.1,816.7" fill="none" stroke="#000" stroke-width="2.05" stroke-linejoin="round" stroke-linecap="round"/>
<polyline points="2043.6,773.4 2049.6,791.3" fill="none" stroke="#000" stroke-width="1.64" stroke-linejoin="round" stroke-linecap="round"/>
<polyline points="2064.5,822.7 2073.4,830.1" fill="none" stroke="#000" stroke-width="2.46" stroke-linejoin="round" stroke-linecap="round"/>
<polyline points="1891.2,900.0 1910.6,921.9 1915.7,935.4 1942.7,972.5" fill="none" stroke="#000" stroke-width="2.62" stroke-linejoin="round" stroke-linecap="round"/>
<polyline points="1905.6,910.1 1914.0,930.4" fill="none" stroke="#000" stroke-width="4.92" stroke-linejoin="round" stroke-linecap="round"/>
<polyline points="1942.7,972.5 1934.2,977.6 1907.2,994.5 1903.9,1002.9" fill="none" stroke="#000" stroke-width="2.46" stroke-linejoin="round" stroke-linecap="round"/>
<polyline points="1903.9,1002.9 1887.0,1011.3" fill="none" stroke="#000" stroke-width="1.64" stroke-linejoin="round" stroke-linecap="round"/>
<polyline points="1887.0,1011.3 1892.1,1028.2 1893.7,1043.4" fill="none" stroke="#000" stroke-width="2.05" stroke-linejoin="round" stroke-linecap="round"/>
<polyline points="1900.5,1040.0 1914.0,1033.3" fill="none" stroke="#000" stroke-width="4.92" stroke-linejoin="round" stroke-linecap="round"/>
<polyline points="1885.3,1035.0 1895.4,1041.7" fill="none" stroke="#000" stroke-width="3.28" stroke-linejoin="round" stroke-linecap="round"/>
<polyline points="1905.6,1046.8 1906.4,1056.9" fill="none" stroke="#000" stroke-width="2.05" stroke-linejoin="round" stroke-linecap="round"/>
<polyline points="1946.9,900.0 1971.3,936.3 1974.7,950.6 1988.2,955.7 2000.0,974.2 2028.7,1018.1 2045.6,1050.1 2077.6,1092.3 2094.5,1117.6 2096.2,1126.1 2108.0,1136.2 2124.9,1160.0" fill="none" stroke="#000" stroke-width="2.30" stroke-linejoin="round" stroke-linecap="round"/>
<polyline points="2070.9,1094.0 2087.8,1119.3" fill="none" stroke="#000" stroke-width="4.92" stroke-linejoin="round" stroke-linecap="round"/>
<polyline points="2020.3,1018.1 2022.0,1024.8 2030.4,1028.2 2032.1,1021.5" fill="none" stroke="#000" stroke-width="2.05" stroke-linejoin="round" stroke-linecap="round"/>
<polyline points="2043.9,1046.8 2045.6,1055.2 2049.8,1056.1" fill="none" stroke="#000" stroke-width="2.05" stroke-linejoin="round" stroke-linecap="round"/>
<polyline points="2132.5,901.7 2224.4,1028.2 2236.2,1030.7 2237.9,1043.4 2251.4,1063.6 2249.7,1070.4 2236.2,1078.0 2260.0,1115.9" fill="none" stroke="#000" stroke-width="2.30" stroke-linejoin="round" stroke-linecap="round"/>
<polyline points="2199.1,900.0 2260.0,987.7" fill="none" stroke="#000" stroke-width="1.97" stroke-linejoin="round" stroke-linecap="round"/>
<polyline points="2198.3,911.8 2204.2,909.3" fill="none" stroke="#000" stroke-width="2.46" stroke-linejoin="round" stroke-linecap="round"/>
<polyline points="2214.3,934.6 2220.2,932.1" fill="none" stroke="#000" stroke-width="2.46" stroke-linejoin="round" stroke-linecap="round"/>
<polyline points="2231.2,959.0 2237.9,955.7" fill="none" stroke="#000" stroke-width="2.46" stroke-linejoin="round" stroke-linecap="round"/>
<polyline points="2246.3,982.7 2252.2,980.1" fill="none" stroke="#000" stroke-width="2.46" stroke-linejoin="round" stroke-linecap="round"/>
<polyline points="1958.7,1033.3 1959.5,1026.5 1963.8,1024.0" fill="none" stroke="#000" stroke-width="2.05" stroke-linejoin="round" stroke-linecap="round"/>
<polyline points="1963.8,1019.8 1989.9,1055.2 1981.5,1060.3" fill="none" stroke="#000" stroke-width="1.97" stroke-linejoin="round" stroke-linecap="round"/>
<polyline points="1974.7,1073.8 1995.0,1062.8" fill="none" stroke="#000" stroke-width="4.10" stroke-linejoin="round" stroke-linecap="round"/>
<polyline points="1978.1,1081.4 2000.0,1068.7 2021.1,1099.9 2011.8,1106.7 2006.8,1105.0" fill="none" stroke="#000" stroke-width="1.64" stroke-linejoin="round" stroke-linecap="round"/>
<polyline points="1952.8,1048.5 1957.8,1051.8" fill="none" stroke="#000" stroke-width="4.10" stroke-linejoin="round" stroke-linecap="round"/>
<polyline points="1939.3,1060.3 1947.7,1062.0" fill="none" stroke="#000" stroke-width="2.46" stroke-linejoin="round" stroke-linecap="round"/>
<polyline points="1910.6,1088.1 1924.1,1091.5" fill="none" stroke="#000" stroke-width="2.46" stroke-linejoin="round" stroke-linecap="round"/>
<polyline points="1908.9,1097.4 1915.7,1100.8" fill="none" stroke="#000" stroke-width="3.28" stroke-linejoin="round" stroke-linecap="round"/>
<polyline points="1932.5,1106.7 1939.3,1104.1" fill="none" stroke="#000" stroke-width="3.28" stroke-linejoin="round" stroke-linecap="round"/>
<polyline points="1961.2,1105.0 1974.7,1102.4" fill="none" stroke="#000" stroke-width="3.28" stroke-linejoin="round" stroke-linecap="round"/>
<polyline points="1976.4,1099.1 1984.8,1095.7" fill="none" stroke="#000" stroke-width="4.10" stroke-linejoin="round" stroke-linecap="round"/>
<polyline points="1941.0,1094.0 1944.4,1099.1" fill="none" stroke="#000" stroke-width="3.28" stroke-linejoin="round" stroke-linecap="round"/>
<polyline points="1871.8,1115.9 1880.2,1117.6 1875.2,1136.2 1870.1,1134.5 1871.8,1115.9" fill="none" stroke="#000" stroke-width="2.13" stroke-linejoin="round" stroke-linecap="round"/>
<polyline points="1885.3,1119.3 1898.8,1124.4 1907.2,1137.9" fill="none" stroke="#000" stroke-width="4.10" stroke-linejoin="round" stroke-linecap="round"/>
<polyline points="1881.9,1146.3 1890.4,1156.4" fill="none" stroke="#000" stroke-width="4.10" stroke-linejoin="round" stroke-linecap="round"/>
<polyline points="1959.5,1148.0 1974.7,1146.3 1995.0,1144.6" fill="none" stroke="#000" stroke-width="2.46" stroke-linejoin="round" stroke-linecap="round"/>
<polyline points="2010.1,1151.4 2018.6,1158.1" fill="none" stroke="#000" stroke-width="4.92" stroke-linejoin="round" stroke-linecap="round"/>
<polyline points="2028.7,1146.3 2040.5,1148.0" fill="none" stroke="#000" stroke-width="4.10" stroke-linejoin="round" stroke-linecap="round"/>
<polyline points="2050.6,1144.6 2062.4,1153.1" fill="none" stroke="#000" stroke-width="3.28" stroke-linejoin="round" stroke-linecap="round"/>
<polyline points="1875.2,1090.6 1876.9,1097.4" fill="none" stroke="#000" stroke-width="2.46" stroke-linejoin="round" stroke-linecap="round"/>
<polyline points="1892.1,1070.4 1894.6,1072.9" fill="none" stroke="#000" stroke-width="2.46" stroke-linejoin="round" stroke-linecap="round"/>
<polyline points="2062.4,1150.1 2081.0,1180.5 2102.9,1214.2 2126.6,1246.3" fill="none" stroke="#000" stroke-width="2.46" stroke-linejoin="round" stroke-linecap="round"/>
<polyline points="2079.3,1178.8 2084.4,1187.2" fill="none" stroke="#000" stroke-width="4.10" stroke-linejoin="round" stroke-linecap="round"/>
<polyline points="2099.6,1210.9 2106.3,1219.3" fill="none" stroke="#000" stroke-width="4.10" stroke-linejoin="round" stroke-linecap="round"/>
<polyline points="2126.6,1246.3 2099.6,1265.7" fill="none" stroke="#000" stroke-width="3.28" stroke-linejoin="round" stroke-linecap="round"/>
<polyline points="2099.6,1265.7 2015.2,1315.5" fill="none" stroke="#000" stroke-width="2.46" stroke-linejoin="round" stroke-linecap="round"/>
<polyline points="2015.2,1315.5 2043.9,1361.0 2030.4,1375.3 2038.8,1386.3" fill="none" stroke="#000" stroke-width="2.46" stroke-linejoin="round" stroke-linecap="round"/>
<polyline points="2040.5,1382.9 2048.9,1388.0" fill="none" stroke="#000" stroke-width="4.92" stroke-linejoin="round" stroke-linecap="round"/>
<polyline points="2137.5,1264.8 2156.9,1298.6" fill="none" stroke="#000" stroke-width="3.28" stroke-linejoin="round" stroke-linecap="round"/>
<polyline points="2155.2,1296.9 2163.7,1302.0" fill="none" stroke="#000" stroke-width="4.92" stroke-linejoin="round" stroke-linecap="round"/>
<polyline points="2163.7,1295.2 2172.1,1308.7 2227.8,1400.0" fill="none" stroke="#000" stroke-width="2.62" stroke-linejoin="round" stroke-linecap="round"/>
<polyline points="2109.7,1140.0 2239.6,1327.3" fill="none" stroke="#000" stroke-width="2.46" stroke-linejoin="round" stroke-linecap="round"/>
<polyline points="2239.6,1327.3 2260.0,1359.3" fill="none" stroke="#000" stroke-width="2.46" stroke-linejoin="round" stroke-linecap="round"/>
<polyline points="2236.2,1323.9 2246.3,1330.6" fill="none" stroke="#000" stroke-width="4.10" stroke-linejoin="round" stroke-linecap="round"/>
<polyline points="2158.6,1332.3 2143.4,1344.1" fill="none" stroke="#000" stroke-width="3.28" stroke-linejoin="round" stroke-linecap="round"/>
<polyline points="2141.7,1350.0 2129.9,1354.3 2126.6,1349.2" fill="none" stroke="#000" stroke-width="2.05" stroke-linejoin="round" stroke-linecap="round"/>
<polyline points="2123.2,1374.5 2106.3,1381.2 2101.2,1364.4" fill="none" stroke="#000" stroke-width="2.05" stroke-linejoin="round" stroke-linecap="round"/>
<polyline points="2097.9,1388.0 2077.6,1400.0" fill="none" stroke="#000" stroke-width="2.87" stroke-linejoin="round" stroke-linecap="round"/>
<polyline points="2074.3,1349.2 2086.1,1350.9" fill="none" stroke="#000" stroke-width="3.28" stroke-linejoin="round" stroke-linecap="round"/>
<polyline points="2092.8,1339.1 2097.9,1341.6" fill="none" stroke="#000" stroke-width="2.46" stroke-linejoin="round" stroke-linecap="round"/>
<polyline points="2122.3,1308.7 2127.4,1309.5" fill="none" stroke="#000" stroke-width="3.28" stroke-linejoin="round" stroke-linecap="round"/>
<polyline points="2082.7,1322.2 2085.2,1323.9" fill="none" stroke="#000" stroke-width="3.28" stroke-linejoin="round" stroke-linecap="round"/>
<polyline points="1881.9,1145.1 1890.4,1163.6 1902.2,1180.5 1908.9,1188.9" fill="none" stroke="#000" stroke-width="2.46" stroke-linejoin="round" stroke-linecap="round"/>
<polyline points="1905.6,1183.9 1914.0,1185.6" fill="none" stroke="#000" stroke-width="4.10" stroke-linejoin="round" stroke-linecap="round"/>
<polyline points="1971.3,1145.1 1978.1,1155.2 1971.3,1161.9 1981.5,1180.5 1988.2,1187.2" fill="none" stroke="#000" stroke-width="2.46" stroke-linejoin="round" stroke-linecap="round"/>
<polyline points="1989.9,1143.4 1995.0,1150.1 1991.6,1161.9 1995.0,1168.7" fill="none" stroke="#000" stroke-width="2.05" stroke-linejoin="round" stroke-linecap="round"/>
<polyline points="1996.7,1179.6 2000.9,1181.3" fill="none" stroke="#000" stroke-width="3.28" stroke-linejoin="round" stroke-linecap="round"/>
<polyline points="2011.8,1150.1 2022.0,1163.6 2033.8,1163.6" fill="none" stroke="#000" stroke-width="4.10" stroke-linejoin="round" stroke-linecap="round"/>
<polyline points="2028.7,1146.7 2040.5,1148.4" fill="none" stroke="#000" stroke-width="4.10" stroke-linejoin="round" stroke-linecap="round"/>
<polyline points="2045.6,1156.9 2054.0,1145.1 2062.4,1150.1" fill="none" stroke="#000" stroke-width="3.28" stroke-linejoin="round" stroke-linecap="round"/>
<polyline points="2045.6,1388.0 2047.3,1400.0" fill="none" stroke="#000" stroke-width="2.46" stroke-linejoin="round" stroke-linecap="round"/>
<polyline points="2214.7,1380.0 2228.2,1401.9 2240.0,1413.7 2256.9,1436.5" fill="none" stroke="#000" stroke-width="2.62" stroke-linejoin="round" stroke-linecap="round"/>
<polyline points="2224.8,1396.9 2238.3,1407.0" fill="none" stroke="#000" stroke-width="4.92" stroke-linejoin="round" stroke-linecap="round"/>
<polyline points="2256.9,1436.5 2228.2,1454.2" fill="none" stroke="#000" stroke-width="3.28" stroke-linejoin="round" stroke-linecap="round"/>
<polyline points="2228.2,1454.2 2138.8,1511.6 2130.4,1522.6" fill="none" stroke="#000" stroke-width="2.46" stroke-linejoin="round" stroke-linecap="round"/>
<polyline points="2130.4,1522.6 2140.5,1536.9 2147.2,1553.8 2157.4,1555.5" fill="none" stroke="#000" stroke-width="2.46" stroke-linejoin="round" stroke-linecap="round"/>
<polyline points="2154.0,1560.5 2160.7,1568.9" fill="none" stroke="#000" stroke-width="2.46" stroke-linejoin="round" stroke-linecap="round"/>
<polyline points="2164.1,1577.4 2170.9,1584.1" fill="none" stroke="#000" stroke-width="2.46" stroke-linejoin="round" stroke-linecap="round"/>
<polyline points="2177.6,1589.2 2179.3,1595.9" fill="none" stroke="#000" stroke-width="2.46" stroke-linejoin="round" stroke-linecap="round"/>
<polyline points="2192.8,1601.0 2202.9,1602.7" fill="none" stroke="#000" stroke-width="2.46" stroke-linejoin="round" stroke-linecap="round"/>
<polyline points="2202.9,1602.7 2208.0,1616.2 2240.0,1633.1 2235.0,1640.0" fill="none" stroke="#000" stroke-width="2.46" stroke-linejoin="round" stroke-linecap="round"/>
<polyline points="2272.1,1380.0 2297.4,1412.1 2324.4,1442.4 2329.4,1461.0 2346.3,1479.5 2353.1,1499.8 2363.2,1504.8 2383.4,1535.2" fill="none" stroke="#000" stroke-width="2.62" stroke-linejoin="round" stroke-linecap="round"/>
<polyline points="2268.7,1459.3 2319.3,1528.5" fill="none" stroke="#000" stroke-width="3.69" stroke-linejoin="round" stroke-linecap="round"/>
<polyline points="2319.3,1528.5 2285.6,1547.0 2235.0,1577.4" fill="none" stroke="#000" stroke-width="2.87" stroke-linejoin="round" stroke-linecap="round"/>
<polyline points="2317.6,1535.2 2241.7,1587.5" fill="none" stroke="#000" stroke-width="2.46" stroke-linejoin="round" stroke-linecap="round"/>
<polyline points="2383.4,1535.2 2442.5,1496.4 2500.0,1455.9" fill="none" stroke="#000" stroke-width="2.46" stroke-linejoin="round" stroke-linecap="round"/>
<polyline points="2440.8,1417.1 2476.2,1466.0" fill="none" stroke="#000" stroke-width="2.46" stroke-linejoin="round" stroke-linecap="round"/>
<polyline points="2447.5,1421.3 2457.7,1414.6" fill="none" stroke="#000" stroke-width="2.46" stroke-linejoin="round" stroke-linecap="round"/>
<polyline points="2454.3,1430.6 2464.4,1425.6" fill="none" stroke="#000" stroke-width="2.46" stroke-linejoin="round" stroke-linecap="round"/>
<polyline points="2461.0,1440.7 2472.8,1436.5" fill="none" stroke="#000" stroke-width="2.46" stroke-linejoin="round" stroke-linecap="round"/>
<polyline points="2427.3,1400.2 2430.7,1403.6 2447.5,1393.5 2457.7,1405.3 2440.8,1417.1" fill="none" stroke="#000" stroke-width="2.46" stroke-linejoin="round" stroke-linecap="round"/>
<polyline points="2427.3,1400.2 2459.3,1380.0" fill="none" stroke="#000" stroke-width="2.46" stroke-linejoin="round" stroke-linecap="round"/>
<polyline points="2391.9,1543.6 2403.7,1535.2" fill="none" stroke="#000" stroke-width="2.46" stroke-linejoin="round" stroke-linecap="round"/>
<polyline points="2391.9,1543.6 2415.5,1577.4 2430.7,1572.3" fill="none" stroke="#000" stroke-width="2.87" stroke-linejoin="round" stroke-linecap="round"/>
<polyline points="2420.5,1558.8 2429.0,1572.3" fill="none" stroke="#000" stroke-width="2.46" stroke-linejoin="round" stroke-linecap="round"/>
<polyline points="2437.4,1511.6 2459.3,1545.3 2469.5,1538.6" fill="none" stroke="#000" stroke-width="2.87" stroke-linejoin="round" stroke-linecap="round"/>
<polyline points="2439.1,1498.1 2444.2,1501.5" fill="none" stroke="#000" stroke-width="4.92" stroke-linejoin="round" stroke-linecap="round"/>
<polyline points="2454.3,1531.8 2467.8,1542.0" fill="none" stroke="#000" stroke-width="4.10" stroke-linejoin="round" stroke-linecap="round"/>
<polyline points="2430.7,1509.9 2442.5,1508.2" fill="none" stroke="#000" stroke-width="2.46" stroke-linejoin="round" stroke-linecap="round"/>
<polyline points="2341.2,1587.5 2349.7,1582.4 2376.7,1619.6" fill="none" stroke="#000" stroke-width="2.87" stroke-linejoin="round" stroke-linecap="round"/>
<polyline points="2341.2,1589.2 2351.4,1604.4" fill="none" stroke="#000" stroke-width="2.46" stroke-linejoin="round" stroke-linecap="round"/>
<polyline points="2354.7,1619.6 2363.2,1629.7 2378.4,1624.6" fill="none" stroke="#000" stroke-width="3.28" stroke-linejoin="round" stroke-linecap="round"/>
<polyline points="2256.9,1589.2 2268.7,1609.4 2275.5,1612.8 2282.2,1606.1 2275.5,1602.7" fill="none" stroke="#000" stroke-width="2.46" stroke-linejoin="round" stroke-linecap="round"/>
<polyline points="2282.2,1606.1 2288.9,1617.9 2267.0,1633.1" fill="none" stroke="#000" stroke-width="2.46" stroke-linejoin="round" stroke-linecap="round"/>
<polyline points="2262.0,1582.4 2267.0,1589.2" fill="none" stroke="#000" stroke-width="4.10" stroke-linejoin="round" stroke-linecap="round"/>
<polyline points="2283.9,1580.8 2294.0,1582.4" fill="none" stroke="#000" stroke-width="4.10" stroke-linejoin="round" stroke-linecap="round"/>
<polyline points="2285.6,1590.9 2295.7,1589.2" fill="none" stroke="#000" stroke-width="4.10" stroke-linejoin="round" stroke-linecap="round"/>
<polyline points="2326.1,1600.2 2334.5,1601.0" fill="none" stroke="#000" stroke-width="2.46" stroke-linejoin="round" stroke-linecap="round"/>
<polyline points="2331.1,1608.6 2337.9,1607.8" fill="none" stroke="#000" stroke-width="4.10" stroke-linejoin="round" stroke-linecap="round"/>
<polyline points="2430.7,1553.8 2437.4,1556.3" fill="none" stroke="#000" stroke-width="3.28" stroke-linejoin="round" stroke-linecap="round"/>
<polyline points="2469.5,1518.3 2472.0,1522.6" fill="none" stroke="#000" stroke-width="4.10" stroke-linejoin="round" stroke-linecap="round"/>
<polyline points="2167.5,1525.1 2182.7,1523.4" fill="none" stroke="#000" stroke-width="3.28" stroke-linejoin="round" stroke-linecap="round"/>
<polyline points="2221.5,1496.4 2231.6,1498.1 2233.3,1506.5" fill="none" stroke="#000" stroke-width="2.05" stroke-linejoin="round" stroke-linecap="round"/>
<polyline points="2241.7,1501.5 2251.8,1508.2" fill="none" stroke="#000" stroke-width="2.46" stroke-linejoin="round" stroke-linecap="round"/>
<polyline points="2199.5,1515.0 2209.7,1523.4" fill="none" stroke="#000" stroke-width="3.28" stroke-linejoin="round" stroke-linecap="round"/>
<polyline points="2223.2,1520.9 2228.2,1521.7" fill="none" stroke="#000" stroke-width="3.28" stroke-linejoin="round" stroke-linecap="round"/>
<polyline points="2208.0,1550.4 2212.2,1555.5" fill="none" stroke="#000" stroke-width="2.46" stroke-linejoin="round" stroke-linecap="round"/>
<polyline points="2157.4,1548.7 2160.7,1550.4" fill="none" stroke="#000" stroke-width="3.28" stroke-linejoin="round" stroke-linecap="round"/>
<polyline points="2216.4,1582.4 2218.1,1587.5" fill="none" stroke="#000" stroke-width="2.46" stroke-linejoin="round" stroke-linecap="round"/>
<polyline points="2484.6,1403.6 2489.7,1400.2 2496.5,1401.1 2500.0,1405.3" fill="none" stroke="#000" stroke-width="2.05" stroke-linejoin="round" stroke-linecap="round"/>
<polyline points="2484.6,1403.6 2484.6,1411.2 2488.9,1415.4 2495.6,1415.8 2500.0,1412.1" fill="none" stroke="#000" stroke-width="2.05" stroke-linejoin="round" stroke-linecap="round"/>
<polyline points="2452.6,1629.7 2456.0,1640.0" fill="none" stroke="#000" stroke-width="2.46" stroke-linejoin="round" stroke-linecap="round"/>
<polyline points="2469.5,1628.8 2472.8,1640.0" fill="none" stroke="#000" stroke-width="2.46" stroke-linejoin="round" stroke-linecap="round"/>
<polyline points="2454.3,1629.7 2469.5,1628.0" fill="none" stroke="#000" stroke-width="2.46" stroke-linejoin="round" stroke-linecap="round"/>
<polyline points="2200.0,989.7 2225.3,1029.3 2234.6,1030.1 2236.3,1042.0 2250.6,1065.6 2236.3,1077.4 2281.0,1140.0" fill="none" stroke="#000" stroke-width="2.30" stroke-linejoin="round" stroke-linecap="round"/>
<polyline points="2200.0,900.2 2267.5,1004.8" fill="none" stroke="#000" stroke-width="2.30" stroke-linejoin="round" stroke-linecap="round"/>
<polyline points="2215.2,934.0 2220.2,932.3" fill="none" stroke="#000" stroke-width="2.46" stroke-linejoin="round" stroke-linecap="round"/>
<polyline points="2232.1,958.4 2240.5,950.9" fill="none" stroke="#000" stroke-width="2.46" stroke-linejoin="round" stroke-linecap="round"/>
<polyline points="2247.2,981.2 2252.3,979.5" fill="none" stroke="#000" stroke-width="2.46" stroke-linejoin="round" stroke-linecap="round"/>
<polyline points="2267.5,1004.8 2265.0,1009.9 2270.9,1011.6 2314.7,982.9" fill="none" stroke="#000" stroke-width="2.79" stroke-linejoin="round" stroke-linecap="round"/>
<polyline points="2311.3,912.1 2320.6,911.2" fill="none" stroke="#000" stroke-width="1.23" stroke-linejoin="round" stroke-linecap="round"/>
<polyline points="2325.7,975.3 2378.8,939.0 2382.2,942.4" fill="none" stroke="#000" stroke-width="2.46" stroke-linejoin="round" stroke-linecap="round"/>
<polyline points="2367.0,952.5 2368.7,959.3 2382.2,962.7 2388.9,959.3 2394.0,947.5 2399.1,945.0" fill="none" stroke="#000" stroke-width="2.46" stroke-linejoin="round" stroke-linecap="round"/>
<polyline points="2358.6,955.9 2368.7,954.2" fill="none" stroke="#000" stroke-width="4.10" stroke-linejoin="round" stroke-linecap="round"/>
<polyline points="2399.1,945.0 2441.2,1005.7" fill="none" stroke="#000" stroke-width="2.46" stroke-linejoin="round" stroke-linecap="round"/>
<polyline points="2441.2,1006.5 2419.3,1007.4 2405.8,1015.0 2404.1,1023.4 2405.8,1029.3 2410.9,1030.1" fill="none" stroke="#000" stroke-width="2.46" stroke-linejoin="round" stroke-linecap="round"/>
<polyline points="2444.6,1013.3 2449.7,1016.7 2448.0,1020.0" fill="none" stroke="#000" stroke-width="2.46" stroke-linejoin="round" stroke-linecap="round"/>
<polyline points="2448.0,1020.0 2348.5,1082.4" fill="none" stroke="#000" stroke-width="2.79" stroke-linejoin="round" stroke-linecap="round"/>
<polyline points="2348.5,1082.4 2333.3,1077.4 2324.8,1084.1 2329.9,1092.6 2335.0,1094.3 2329.9,1101.0 2343.4,1116.2 2348.5,1128.0 2363.6,1140.0" fill="none" stroke="#000" stroke-width="2.46" stroke-linejoin="round" stroke-linecap="round"/>
<polyline points="2335.0,1092.6 2345.1,1086.7" fill="none" stroke="#000" stroke-width="1.23" stroke-linejoin="round" stroke-linecap="round"/>
<polyline points="2343.4,981.2 2358.6,982.9" fill="none" stroke="#000" stroke-width="6.56" stroke-linejoin="round" stroke-linecap="round"/>
<polyline points="2363.6,961.0 2356.9,979.5" fill="none" stroke="#000" stroke-width="1.23" stroke-linejoin="round" stroke-linecap="round"/>
<polyline points="2375.5,996.4 2380.5,1001.5" fill="none" stroke="#000" stroke-width="4.10" stroke-linejoin="round" stroke-linecap="round"/>
<polyline points="2362.0,1036.9 2367.0,1039.4" fill="none" stroke="#000" stroke-width="3.28" stroke-linejoin="round" stroke-linecap="round"/>
<polyline points="2352.3,1029.8 2353.2,1030.7" fill="none" stroke="#000" stroke-width="2.46" stroke-linejoin="round" stroke-linecap="round"/>
<polyline points="2346.8,888.4 2349.3,891.8" fill="none" stroke="#000" stroke-width="2.46" stroke-linejoin="round" stroke-linecap="round"/>
<polyline points="2326.5,896.0 2331.6,897.7" fill="none" stroke="#000" stroke-width="2.46" stroke-linejoin="round" stroke-linecap="round"/>
<polyline points="2346.8,1121.2 2356.9,1133.1" fill="none" stroke="#000" stroke-width="4.10" stroke-linejoin="round" stroke-linecap="round"/>
<polyline points="2264.1,1120.0 2291.1,1157.1" fill="none" stroke="#000" stroke-width="2.46" stroke-linejoin="round" stroke-linecap="round"/>
<polyline points="2294.5,1162.2 2287.7,1159.6 2277.6,1165.6 2291.1,1185.8 2308.0,1176.5" fill="none" stroke="#000" stroke-width="2.46" stroke-linejoin="round" stroke-linecap="round"/>
<polyline points="2308.0,1176.5 2324.8,1195.9" fill="none" stroke="#000" stroke-width="1.64" stroke-linejoin="round" stroke-linecap="round"/>
<polyline points="2311.3,1180.7 2311.3,1204.4" fill="none" stroke="#000" stroke-width="0.82" stroke-linejoin="round" stroke-linecap="round"/>
<polyline points="2309.7,1211.1 2338.3,1190.9" fill="none" stroke="#000" stroke-width="4.10" stroke-linejoin="round" stroke-linecap="round"/>
<polyline points="2338.3,1190.9 2449.7,1341.0 2469.9,1371.4 2459.8,1380.0" fill="none" stroke="#000" stroke-width="2.46" stroke-linejoin="round" stroke-linecap="round"/>
<polyline points="2346.8,1120.0 2351.8,1136.9 2368.7,1158.8" fill="none" stroke="#000" stroke-width="4.10" stroke-linejoin="round" stroke-linecap="round"/>
<polyline points="2368.7,1158.8 2402.4,1195.9 2407.5,1214.5 2415.9,1228.0 2429.4,1229.7" fill="none" stroke="#000" stroke-width="2.46" stroke-linejoin="round" stroke-linecap="round"/>
<polyline points="2414.3,1226.3 2427.8,1228.0" fill="none" stroke="#000" stroke-width="4.10" stroke-linejoin="round" stroke-linecap="round"/>
<polyline points="2429.4,1229.7 2446.3,1258.3 2486.8,1314.0 2510.4,1342.7 2530.7,1380.0" fill="none" stroke="#000" stroke-width="2.62" stroke-linejoin="round" stroke-linecap="round"/>
<polyline points="2486.8,1314.0 2496.9,1327.5" fill="none" stroke="#000" stroke-width="4.10" stroke-linejoin="round" stroke-linecap="round"/>
<polyline points="2507.0,1339.3 2512.1,1349.4" fill="none" stroke="#000" stroke-width="4.10" stroke-linejoin="round" stroke-linecap="round"/>
<polyline points="2444.6,1255.0 2451.4,1265.1" fill="none" stroke="#000" stroke-width="3.28" stroke-linejoin="round" stroke-linecap="round"/>
<polyline points="2479.2,1319.1 2480.9,1323.3 2485.1,1322.4" fill="none" stroke="#000" stroke-width="2.05" stroke-linejoin="round" stroke-linecap="round"/>
<polyline points="2600.0,1335.9 2534.0,1380.0" fill="none" stroke="#000" stroke-width="2.62" stroke-linejoin="round" stroke-linecap="round"/>
<polyline points="2200.0,1271.0 2238.8,1327.5 2274.2,1380.0" fill="none" stroke="#000" stroke-width="2.62" stroke-linejoin="round" stroke-linecap="round"/>
<polyline points="2233.7,1322.4 2243.9,1330.9" fill="none" stroke="#000" stroke-width="4.92" stroke-linejoin="round" stroke-linecap="round"/>
<polyline points="2262.4,1362.9 2272.5,1369.7" fill="none" stroke="#000" stroke-width="5.74" stroke-linejoin="round" stroke-linecap="round"/>
<polyline points="2200.0,1352.8 2215.2,1380.0" fill="none" stroke="#000" stroke-width="2.87" stroke-linejoin="round" stroke-linecap="round"/>
<polyline points="2222.8,1274.4 2231.2,1276.1 2240.5,1287.0" fill="none" stroke="#000" stroke-width="1.64" stroke-linejoin="round" stroke-linecap="round"/>
<polyline points="2250.6,1265.1 2260.7,1282.0" fill="none" stroke="#000" stroke-width="1.64" stroke-linejoin="round" stroke-linecap="round"/>
<polyline points="2240.5,1287.0 2250.6,1307.3" fill="none" stroke="#000" stroke-width="1.64" stroke-linejoin="round" stroke-linecap="round"/>
<polyline points="2262.4,1327.5 2275.9,1337.6" fill="none" stroke="#000" stroke-width="2.46" stroke-linejoin="round" stroke-linecap="round"/>
<polyline points="2367.0,1173.1 2371.2,1174.8" fill="none" stroke="#000" stroke-width="2.46" stroke-linejoin="round" stroke-linecap="round"/>
<polyline points="2402.4,1194.2 2407.5,1204.4" fill="none" stroke="#000" stroke-width="3.28" stroke-linejoin="round" stroke-linecap="round"/>
<polyline points="2423.2,1192.2 2424.0,1193.2" fill="none" stroke="#000" stroke-width="2.46" stroke-linejoin="round" stroke-linecap="round"/>
<polyline points="2433.3,1204.9 2434.2,1205.9" fill="none" stroke="#000" stroke-width="2.46" stroke-linejoin="round" stroke-linecap="round"/>
<polyline points="2254.5,1372.7 2255.3,1373.7" fill="none" stroke="#000" stroke-width="3.28" stroke-linejoin="round" stroke-linecap="round"/>
<polyline points="2586.3,1369.7 2594.8,1373.1" fill="none" stroke="#000" stroke-width="4.92" stroke-linejoin="round" stroke-linecap="round"/>
<polyline points="2475.2,1300.0 2493.7,1318.6 2510.6,1343.9 2532.5,1381.8" fill="none" stroke="#000" stroke-width="3.28" stroke-linejoin="round" stroke-linecap="round"/>
<polyline points="2478.6,1316.9 2481.1,1322.8 2485.3,1321.9" fill="none" stroke="#000" stroke-width="2.05" stroke-linejoin="round" stroke-linecap="round"/>
<polyline points="2532.5,1381.8 2561.2,1364.1 2622.0,1325.3" fill="none" stroke="#000" stroke-width="2.62" stroke-linejoin="round" stroke-linecap="round"/>
<polyline points="2596.7,1352.3 2606.8,1345.6 2622.0,1365.8 2614.4,1371.7 2620.3,1381.0 2630.4,1381.0 2643.9,1374.2 2648.9,1364.1" fill="none" stroke="#000" stroke-width="2.62" stroke-linejoin="round" stroke-linecap="round"/>
<polyline points="2596.7,1352.3 2596.7,1359.0 2603.4,1364.1" fill="none" stroke="#000" stroke-width="2.46" stroke-linejoin="round" stroke-linecap="round"/>
<polyline points="2636.3,1311.8 2638.8,1323.6" fill="none" stroke="#000" stroke-width="2.46" stroke-linejoin="round" stroke-linecap="round"/>
<polyline points="2643.9,1327.0 2650.6,1330.4" fill="none" stroke="#000" stroke-width="2.46" stroke-linejoin="round" stroke-linecap="round"/>
<polyline points="2654.0,1333.7 2660.8,1332.1 2660.8,1321.9" fill="none" stroke="#000" stroke-width="2.46" stroke-linejoin="round" stroke-linecap="round"/>
<polyline points="2656.5,1308.4 2667.5,1316.9" fill="none" stroke="#000" stroke-width="2.46" stroke-linejoin="round" stroke-linecap="round"/>
<polyline points="2667.5,1316.9 2760.3,1440.0" fill="none" stroke="#000" stroke-width="2.62" stroke-linejoin="round" stroke-linecap="round"/>
<polyline points="2684.4,1345.6 2689.4,1347.2" fill="none" stroke="#000" stroke-width="3.28" stroke-linejoin="round" stroke-linecap="round"/>
<polyline points="2760.3,1440.0 2753.5,1443.4 2756.9,1450.1 2775.5,1462.0" fill="none" stroke="#000" stroke-width="2.13" stroke-linejoin="round" stroke-linecap="round"/>
<polyline points="2785.6,1482.2 2723.2,1510.9 2702.9,1526.1 2667.5,1560.0" fill="none" stroke="#000" stroke-width="2.46" stroke-linejoin="round" stroke-linecap="round"/>
<polyline points="2714.7,1462.8 2702.9,1462.8 2696.2,1468.7 2692.8,1482.2 2699.6,1492.3 2709.7,1485.6 2724.9,1507.5" fill="none" stroke="#000" stroke-width="2.62" stroke-linejoin="round" stroke-linecap="round"/>
<polyline points="2500.8,1408.8 2500.0,1412.6 2497.5,1415.7 2494.0,1417.4 2490.1,1417.4 2486.6,1415.7 2484.2,1412.6 2483.3,1408.8 2484.2,1405.0 2486.6,1402.0 2490.1,1400.3 2494.0,1400.3 2497.5,1402.0 2500.0,1405.0 2500.8,1408.8" fill="none" stroke="#000" stroke-width="2.30" stroke-linejoin="round" stroke-linecap="round"/>
<polyline points="2574.7,1421.5 2578.1,1418.1 2586.5,1423.2 2608.5,1456.9 2600.0,1464.5 2578.1,1433.3 2574.7,1421.5" fill="none" stroke="#000" stroke-width="2.46" stroke-linejoin="round" stroke-linecap="round"/>
<polyline points="2593.3,1435.0 2603.4,1443.4 2608.5,1440.0" fill="none" stroke="#000" stroke-width="3.28" stroke-linejoin="round" stroke-linecap="round"/>
<polyline points="2603.4,1468.7 2647.3,1438.3" fill="none" stroke="#000" stroke-width="2.46" stroke-linejoin="round" stroke-linecap="round"/>
<polyline points="2605.1,1472.1 2648.9,1443.4" fill="none" stroke="#000" stroke-width="1.64" stroke-linejoin="round" stroke-linecap="round"/>
<polyline points="2603.4,1468.7 2605.1,1472.1" fill="none" stroke="#000" stroke-width="2.46" stroke-linejoin="round" stroke-linecap="round"/>
<polyline points="2608.5,1477.1 2616.9,1473.8 2622.0,1478.8 2623.6,1483.9 2642.2,1505.8 2632.1,1513.4 2608.5,1477.1" fill="none" stroke="#000" stroke-width="2.46" stroke-linejoin="round" stroke-linecap="round"/>
<polyline points="2645.6,1458.6 2647.3,1478.8" fill="none" stroke="#000" stroke-width="1.64" stroke-linejoin="round" stroke-linecap="round"/>
<polyline points="2642.2,1473.8 2652.3,1475.5" fill="none" stroke="#000" stroke-width="2.46" stroke-linejoin="round" stroke-linecap="round"/>
<polyline points="2691.1,1389.4 2708.0,1421.5" fill="none" stroke="#000" stroke-width="2.05" stroke-linejoin="round" stroke-linecap="round"/>
<polyline points="2696.2,1394.5 2711.4,1418.1" fill="none" stroke="#000" stroke-width="1.23" stroke-linejoin="round" stroke-linecap="round"/>
<polyline points="2704.6,1419.8 2711.4,1421.5" fill="none" stroke="#000" stroke-width="4.10" stroke-linejoin="round" stroke-linecap="round"/>
<polyline points="2691.1,1389.4 2696.2,1394.5" fill="none" stroke="#000" stroke-width="3.28" stroke-linejoin="round" stroke-linecap="round"/>
<polyline points="2618.6,1433.3 2628.7,1433.3" fill="none" stroke="#000" stroke-width="4.92" stroke-linejoin="round" stroke-linecap="round"/>
<polyline points="2623.6,1428.2 2623.6,1438.3" fill="none" stroke="#000" stroke-width="4.10" stroke-linejoin="round" stroke-linecap="round"/>
<polyline points="2588.2,1372.5 2593.3,1374.2" fill="none" stroke="#000" stroke-width="5.74" stroke-linejoin="round" stroke-linecap="round"/>
<polyline points="2654.0,1413.9 2657.4,1413.0" fill="none" stroke="#000" stroke-width="3.28" stroke-linejoin="round" stroke-linecap="round"/>
<polyline points="2625.0,1421.1 2625.8,1422.0" fill="none" stroke="#000" stroke-width="3.28" stroke-linejoin="round" stroke-linecap="round"/>
<polyline points="2682.7,1510.9 2687.8,1509.2" fill="none" stroke="#000" stroke-width="4.10" stroke-linejoin="round" stroke-linecap="round"/>
<polyline points="2510.6,1500.8 2515.7,1501.6" fill="none" stroke="#000" stroke-width="4.92" stroke-linejoin="round" stroke-linecap="round"/>
<polyline points="2470.1,1519.3 2471.8,1522.7" fill="none" stroke="#000" stroke-width="4.10" stroke-linejoin="round" stroke-linecap="round"/>
<polyline points="2512.3,1480.5 2515.7,1481.4" fill="none" stroke="#000" stroke-width="3.28" stroke-linejoin="round" stroke-linecap="round"/>
<polyline points="2679.0,1527.4 2679.7,1528.3" fill="none" stroke="#000" stroke-width="2.46" stroke-linejoin="round" stroke-linecap="round"/>
<polyline points="2460.0,1475.5 2476.9,1463.6 2517.4,1440.0 2519.0,1445.1" fill="none" stroke="#000" stroke-width="2.62" stroke-linejoin="round" stroke-linecap="round"/>
<polyline points="2460.0,1485.6 2490.4,1467.0 2519.0,1448.5" fill="none" stroke="#000" stroke-width="2.62" stroke-linejoin="round" stroke-linecap="round"/>
<polyline points="2460.0,1443.4 2475.2,1466.2" fill="none" stroke="#000" stroke-width="2.62" stroke-linejoin="round" stroke-linecap="round"/>
<polyline points="2461.7,1440.0 2471.8,1436.7" fill="none" stroke="#000" stroke-width="2.05" stroke-linejoin="round" stroke-linecap="round"/>
<polyline points="2515.7,1458.6 2524.1,1453.5 2547.7,1485.6" fill="none" stroke="#000" stroke-width="2.62" stroke-linejoin="round" stroke-linecap="round"/>
<polyline points="2529.2,1468.7 2529.2,1482.2 2539.3,1494.0 2549.4,1497.4" fill="none" stroke="#000" stroke-width="2.46" stroke-linejoin="round" stroke-linecap="round"/>
<polyline points="2574.7,1539.6 2578.1,1537.9 2584.8,1541.2 2598.3,1560.0" fill="none" stroke="#000" stroke-width="2.46" stroke-linejoin="round" stroke-linecap="round"/>
<polyline points="2574.7,1539.6 2576.4,1549.7 2581.5,1560.0" fill="none" stroke="#000" stroke-width="2.46" stroke-linejoin="round" stroke-linecap="round"/>
<polyline points="2460.0,1365.8 2469.3,1372.5 2460.0,1379.3" fill="none" stroke="#000" stroke-width="2.46" stroke-linejoin="round" stroke-linecap="round"/>
<polyline points="2460.0,1532.8 2470.1,1539.6 2460.0,1548.0" fill="none" stroke="#000" stroke-width="2.46" stroke-linejoin="round" stroke-linecap="round"/>
<polyline points="2647.3,1428.2 2652.3,1433.3 2660.8,1435.0" fill="none" stroke="#000" stroke-width="4.10" stroke-linejoin="round" stroke-linecap="round"/>
<polyline points="2654.0,1448.5 2660.8,1450.1" fill="none" stroke="#000" stroke-width="3.28" stroke-linejoin="round" stroke-linecap="round"/>
<polyline points="2060.0,785.0 2105.6,855.0 2114.0,856.7 2119.0,870.1 2127.5,873.5 2134.2,885.3 2130.9,895.5 2193.3,980.0" fill="none" stroke="#000" stroke-width="2.30" stroke-linejoin="round" stroke-linecap="round"/>
<polyline points="2127.5,882.0 2135.9,887.0" fill="none" stroke="#000" stroke-width="4.10" stroke-linejoin="round" stroke-linecap="round"/>
<polyline points="2147.7,836.4 2254.0,980.0" fill="none" stroke="#000" stroke-width="2.30" stroke-linejoin="round" stroke-linecap="round"/>
<polyline points="2166.3,863.4 2174.7,856.7" fill="none" stroke="#000" stroke-width="3.28" stroke-linejoin="round" stroke-linecap="round"/>
<polyline points="2181.5,887.0 2191.6,887.0" fill="none" stroke="#000" stroke-width="2.46" stroke-linejoin="round" stroke-linecap="round"/>
<polyline points="2198.3,911.5 2206.8,908.9" fill="none" stroke="#000" stroke-width="2.46" stroke-linejoin="round" stroke-linecap="round"/>
<polyline points="2214.4,935.1 2220.3,932.6" fill="none" stroke="#000" stroke-width="2.46" stroke-linejoin="round" stroke-linecap="round"/>
<polyline points="2230.4,957.9 2240.5,951.1" fill="none" stroke="#000" stroke-width="3.28" stroke-linejoin="round" stroke-linecap="round"/>
<polyline points="2147.7,836.4 2171.3,819.5 2218.6,788.3" fill="none" stroke="#000" stroke-width="2.62" stroke-linejoin="round" stroke-linecap="round"/>
<polyline points="2151.1,843.2 2154.5,841.5" fill="none" stroke="#000" stroke-width="2.46" stroke-linejoin="round" stroke-linecap="round"/>
<polyline points="2134.2,804.4 2141.0,802.7 2154.5,814.5 2162.9,821.2" fill="none" stroke="#000" stroke-width="5.74" stroke-linejoin="round" stroke-linecap="round"/>
<polyline points="2161.2,817.8 2159.5,826.3" fill="none" stroke="#000" stroke-width="3.28" stroke-linejoin="round" stroke-linecap="round"/>
<polyline points="2168.0,784.1 2174.7,777.4 2188.2,770.6" fill="none" stroke="#000" stroke-width="3.28" stroke-linejoin="round" stroke-linecap="round"/>
<polyline points="2169.7,785.8 2178.1,789.2" fill="none" stroke="#000" stroke-width="3.28" stroke-linejoin="round" stroke-linecap="round"/>
<polyline points="2198.3,785.8 2206.8,785.8" fill="none" stroke="#000" stroke-width="3.28" stroke-linejoin="round" stroke-linecap="round"/>
<polyline points="2179.8,760.5 2188.2,770.6" fill="none" stroke="#000" stroke-width="2.46" stroke-linejoin="round" stroke-linecap="round"/>
<polyline points="2189.9,770.6 2203.4,777.4" fill="none" stroke="#000" stroke-width="2.05" stroke-linejoin="round" stroke-linecap="round"/>
<polyline points="2368.7,828.0 2402.5,875.2" fill="none" stroke="#000" stroke-width="2.62" stroke-linejoin="round" stroke-linecap="round"/>
<polyline points="2394.0,865.1 2405.8,876.9" fill="none" stroke="#000" stroke-width="3.28" stroke-linejoin="round" stroke-linecap="round"/>
<polyline points="2311.4,912.3 2320.6,911.5" fill="none" stroke="#000" stroke-width="1.23" stroke-linejoin="round" stroke-linecap="round"/>
<polyline points="2340.1,844.8 2345.1,861.7" fill="none" stroke="#000" stroke-width="2.46" stroke-linejoin="round" stroke-linecap="round"/>
<polyline points="2346.8,888.7 2350.2,887.0" fill="none" stroke="#000" stroke-width="3.28" stroke-linejoin="round" stroke-linecap="round"/>
<polyline points="2326.6,896.3 2331.6,897.1" fill="none" stroke="#000" stroke-width="3.28" stroke-linejoin="round" stroke-linecap="round"/>
<polyline points="2336.3,901.0 2337.2,902.0" fill="none" stroke="#000" stroke-width="2.46" stroke-linejoin="round" stroke-linecap="round"/>
<polyline points="2346.8,935.1 2348.5,935.9" fill="none" stroke="#000" stroke-width="2.46" stroke-linejoin="round" stroke-linecap="round"/>
<polyline points="2356.1,935.6 2357.8,936.4" fill="none" stroke="#000" stroke-width="2.46" stroke-linejoin="round" stroke-linecap="round"/>
<polyline points="2209.7,1641.1 2268.7,1726.3 2319.3,1803.9 2327.8,1816.5" fill="none" stroke="#000" stroke-width="2.62" stroke-linejoin="round" stroke-linecap="round"/>
<polyline points="2209.7,1621.7 2228.2,1626.7 2240.0,1634.3 2233.3,1641.1 2221.5,1641.6" fill="none" stroke="#000" stroke-width="2.46" stroke-linejoin="round" stroke-linecap="round"/>
<polyline points="2319.3,1803.9 2353.1,1782.8" fill="none" stroke="#000" stroke-width="2.46" stroke-linejoin="round" stroke-linecap="round"/>
<polyline points="2369.9,1766.8 2403.7,1744.8 2450.9,1717.8" fill="none" stroke="#000" stroke-width="2.87" stroke-linejoin="round" stroke-linecap="round"/>
<polyline points="2450.9,1717.8 2476.2,1755.0 2479.6,1771.8 2500.0,1790.4" fill="none" stroke="#000" stroke-width="2.62" stroke-linejoin="round" stroke-linecap="round"/>
<polyline points="2489.7,1788.7 2500.0,1793.8" fill="none" stroke="#000" stroke-width="4.92" stroke-linejoin="round" stroke-linecap="round"/>
<polyline points="2344.6,1717.0 2353.1,1717.0" fill="none" stroke="#000" stroke-width="2.46" stroke-linejoin="round" stroke-linecap="round"/>
<polyline points="2348.0,1721.2 2339.6,1728.0 2339.6,1736.4" fill="none" stroke="#000" stroke-width="2.87" stroke-linejoin="round" stroke-linecap="round"/>
<polyline points="2356.4,1717.8 2363.2,1721.2 2364.9,1728.0 2359.8,1736.4 2369.9,1755.0 2378.4,1753.3" fill="none" stroke="#000" stroke-width="2.87" stroke-linejoin="round" stroke-linecap="round"/>
<polyline points="2273.8,1707.7 2312.6,1707.7" fill="none" stroke="#000" stroke-width="3.28" stroke-linejoin="round" stroke-linecap="round"/>
<polyline points="2312.6,1702.7 2312.6,1714.5 2309.2,1717.0" fill="none" stroke="#000" stroke-width="2.46" stroke-linejoin="round" stroke-linecap="round"/>
<polyline points="2273.8,1706.0 2280.5,1709.4" fill="none" stroke="#000" stroke-width="4.92" stroke-linejoin="round" stroke-linecap="round"/>
<polyline points="2295.7,1647.0 2292.3,1682.4" fill="none" stroke="#000" stroke-width="2.46" stroke-linejoin="round" stroke-linecap="round"/>
<polyline points="2288.9,1647.0 2300.8,1647.0" fill="none" stroke="#000" stroke-width="1.64" stroke-linejoin="round" stroke-linecap="round"/>
<polyline points="2288.1,1641.6 2294.9,1641.6" fill="none" stroke="#000" stroke-width="1.64" stroke-linejoin="round" stroke-linecap="round"/>
<polyline points="2288.9,1680.7 2297.4,1679.9" fill="none" stroke="#000" stroke-width="2.46" stroke-linejoin="round" stroke-linecap="round"/>
<polyline points="2302.4,1685.8 2303.3,1689.2" fill="none" stroke="#000" stroke-width="2.46" stroke-linejoin="round" stroke-linecap="round"/>
<polyline points="2335.3,1658.0 2368.2,1636.9" fill="none" stroke="#000" stroke-width="4.92" stroke-linejoin="round" stroke-linecap="round"/>
<polyline points="2381.7,1635.2 2388.5,1631.8 2408.7,1665.6 2398.6,1675.7 2391.9,1665.6 2381.7,1635.2" fill="none" stroke="#000" stroke-width="2.87" stroke-linejoin="round" stroke-linecap="round"/>
<polyline points="2356.4,1620.0 2363.2,1630.1 2376.7,1630.1 2380.1,1620.0" fill="none" stroke="#000" stroke-width="2.46" stroke-linejoin="round" stroke-linecap="round"/>
<polyline points="2375.0,1677.4 2380.1,1675.7" fill="none" stroke="#000" stroke-width="4.92" stroke-linejoin="round" stroke-linecap="round"/>
<polyline points="2329.4,1749.9 2331.1,1760.0" fill="none" stroke="#000" stroke-width="3.28" stroke-linejoin="round" stroke-linecap="round"/>
<polyline points="2324.4,1756.7 2334.5,1755.0" fill="none" stroke="#000" stroke-width="2.46" stroke-linejoin="round" stroke-linecap="round"/>
<polyline points="2454.3,1633.5 2457.7,1628.4 2464.4,1625.9 2471.2,1635.2" fill="none" stroke="#000" stroke-width="2.46" stroke-linejoin="round" stroke-linecap="round"/>
<polyline points="2454.3,1633.5 2477.9,1668.9 2488.0,1658.8" fill="none" stroke="#000" stroke-width="2.87" stroke-linejoin="round" stroke-linecap="round"/>
<polyline points="2481.3,1679.0 2500.0,1668.9" fill="none" stroke="#000" stroke-width="3.28" stroke-linejoin="round" stroke-linecap="round"/>
<polyline points="2484.6,1689.2 2488.0,1697.6 2500.0,1701.0" fill="none" stroke="#000" stroke-width="2.46" stroke-linejoin="round" stroke-linecap="round"/>
<polyline points="2493.1,1626.7 2500.0,1636.9" fill="none" stroke="#000" stroke-width="4.10" stroke-linejoin="round" stroke-linecap="round"/>
<polyline points="2434.0,1721.2 2447.5,1719.5" fill="none" stroke="#000" stroke-width="3.28" stroke-linejoin="round" stroke-linecap="round"/>
<polyline points="2694.7,1540.0 2684.6,1548.4 2661.0,1565.3 2666.1,1575.4 2682.9,1595.7" fill="none" stroke="#000" stroke-width="2.62" stroke-linejoin="round" stroke-linecap="round"/>
<polyline points="2682.9,1594.0 2682.9,1607.5" fill="none" stroke="#000" stroke-width="4.10" stroke-linejoin="round" stroke-linecap="round"/>
<polyline points="2689.7,1604.1 2709.9,1631.1 2726.8,1656.4" fill="none" stroke="#000" stroke-width="2.62" stroke-linejoin="round" stroke-linecap="round"/>
<polyline points="2726.8,1656.4 2686.3,1685.1 2659.3,1707.0 2551.3,1788.8 2558.1,1800.0" fill="none" stroke="#000" stroke-width="2.62" stroke-linejoin="round" stroke-linecap="round"/>
<polyline points="2689.0,1684.2 2688.7,1685.4 2688.0,1686.4 2686.9,1686.9 2685.7,1686.9 2684.6,1686.4 2683.9,1685.4 2683.6,1684.2 2683.9,1683.1 2684.6,1682.1 2685.7,1681.6 2686.9,1681.6 2688.0,1682.1 2688.7,1683.1 2689.0,1684.2" fill="none" stroke="#000" stroke-width="2.13" stroke-linejoin="round" stroke-linecap="round"/>
<polyline points="2440.0,1724.7 2451.8,1718.0 2475.4,1754.3 2488.9,1789.7 2505.8,1800.0" fill="none" stroke="#000" stroke-width="2.62" stroke-linejoin="round" stroke-linecap="round"/>
<polyline points="2488.9,1789.7 2499.0,1793.1" fill="none" stroke="#000" stroke-width="4.92" stroke-linejoin="round" stroke-linecap="round"/>
<polyline points="2575.0,1541.7 2585.1,1541.7 2608.7,1573.7 2598.6,1581.3" fill="none" stroke="#000" stroke-width="2.87" stroke-linejoin="round" stroke-linecap="round"/>
<polyline points="2575.0,1541.7 2578.3,1555.2 2588.5,1561.9 2598.6,1561.9" fill="none" stroke="#000" stroke-width="2.46" stroke-linejoin="round" stroke-linecap="round"/>
<polyline points="2482.2,1678.3 2615.5,1583.9" fill="none" stroke="#000" stroke-width="3.69" stroke-linejoin="round" stroke-linecap="round"/>
<polyline points="2531.1,1637.8 2613.8,1582.2" fill="none" stroke="#000" stroke-width="2.46" stroke-linejoin="round" stroke-linecap="round"/>
<polyline points="2500.7,1705.3 2515.9,1661.5 2558.1,1624.4 2591.8,1612.5 2632.3,1609.2" fill="none" stroke="#000" stroke-width="3.69" stroke-linejoin="round" stroke-linecap="round"/>
<polyline points="2631.8,1596.5 2630.9,1600.3 2628.5,1603.4 2625.0,1605.1 2621.1,1605.1 2617.6,1603.4 2615.1,1600.3 2614.3,1596.5 2615.1,1592.7 2617.6,1589.7 2621.1,1588.0 2625.0,1588.0 2628.5,1589.7 2630.9,1592.7 2631.8,1596.5" fill="none" stroke="#000" stroke-width="2.30" stroke-linejoin="round" stroke-linecap="round"/>
<polyline points="2618.8,1607.5 2632.3,1612.5" fill="none" stroke="#000" stroke-width="3.28" stroke-linejoin="round" stroke-linecap="round"/>
<polyline points="2500.4,1691.8 2499.6,1695.3 2497.3,1698.2 2494.1,1699.7 2490.5,1699.7 2487.2,1698.2 2485.0,1695.3 2484.2,1691.8 2485.0,1688.3 2487.2,1685.5 2490.5,1683.9 2494.1,1683.9 2497.3,1685.5 2499.6,1688.3 2500.4,1691.8" fill="none" stroke="#000" stroke-width="2.30" stroke-linejoin="round" stroke-linecap="round"/>
<polyline points="2497.4,1600.7 2504.1,1595.7 2510.9,1598.2 2514.2,1607.5" fill="none" stroke="#000" stroke-width="2.87" stroke-linejoin="round" stroke-linecap="round"/>
<polyline points="2497.4,1600.7 2522.7,1639.5" fill="none" stroke="#000" stroke-width="2.87" stroke-linejoin="round" stroke-linecap="round"/>
<polyline points="2453.5,1632.8 2460.2,1626.0 2467.0,1627.7 2470.4,1636.2" fill="none" stroke="#000" stroke-width="2.87" stroke-linejoin="round" stroke-linecap="round"/>
<polyline points="2453.5,1632.8 2477.1,1669.9 2488.9,1661.5" fill="none" stroke="#000" stroke-width="2.87" stroke-linejoin="round" stroke-linecap="round"/>
<polyline points="2492.3,1629.4 2499.0,1641.2 2504.1,1641.2" fill="none" stroke="#000" stroke-width="4.10" stroke-linejoin="round" stroke-linecap="round"/>
<polyline points="2478.8,1642.9 2488.9,1642.9" fill="none" stroke="#000" stroke-width="2.46" stroke-linejoin="round" stroke-linecap="round"/>
<polyline points="2526.0,1627.7 2531.1,1629.4" fill="none" stroke="#000" stroke-width="4.10" stroke-linejoin="round" stroke-linecap="round"/>
<polyline points="2608.7,1648.0 2630.6,1676.7" fill="none" stroke="#000" stroke-width="2.46" stroke-linejoin="round" stroke-linecap="round"/>
<polyline points="2612.1,1661.5 2551.3,1707.0" fill="none" stroke="#000" stroke-width="3.28" stroke-linejoin="round" stroke-linecap="round"/>
<polyline points="2537.8,1701.1 2559.8,1728.9" fill="none" stroke="#000" stroke-width="2.46" stroke-linejoin="round" stroke-linecap="round"/>
<polyline points="2536.2,1592.3 2546.3,1595.7" fill="none" stroke="#000" stroke-width="2.46" stroke-linejoin="round" stroke-linecap="round"/>
<polyline points="2539.5,1590.6 2541.2,1602.4" fill="none" stroke="#000" stroke-width="2.46" stroke-linejoin="round" stroke-linecap="round"/>
<polyline points="2451.8,1540.0 2458.6,1546.7 2470.4,1541.7" fill="none" stroke="#000" stroke-width="2.46" stroke-linejoin="round" stroke-linecap="round"/>
<polyline points="2569.9,1662.3 2571.6,1662.3" fill="none" stroke="#000" stroke-width="2.13" stroke-linejoin="round" stroke-linecap="round"/>
<polyline points="2584.2,1663.2 2585.9,1663.2" fill="none" stroke="#000" stroke-width="2.13" stroke-linejoin="round" stroke-linecap="round"/>
<polyline points="2599.4,1654.7 2601.1,1654.7" fill="none" stroke="#000" stroke-width="2.13" stroke-linejoin="round" stroke-linecap="round"/>
<polyline points="2550.5,1676.7 2552.2,1676.7" fill="none" stroke="#000" stroke-width="2.13" stroke-linejoin="round" stroke-linecap="round"/>
<polyline points="2577.5,1674.1 2579.2,1674.1" fill="none" stroke="#000" stroke-width="2.13" stroke-linejoin="round" stroke-linecap="round"/>
<polyline points="2539.5,1685.1 2541.2,1685.1" fill="none" stroke="#000" stroke-width="2.13" stroke-linejoin="round" stroke-linecap="round"/>
<polyline points="2550.5,1690.1 2552.2,1690.1" fill="none" stroke="#000" stroke-width="2.13" stroke-linejoin="round" stroke-linecap="round"/>
<polyline points="2612.1,1687.6 2613.8,1687.6" fill="none" stroke="#000" stroke-width="2.13" stroke-linejoin="round" stroke-linecap="round"/>
<polyline points="2625.6,1691.0 2627.3,1691.0" fill="none" stroke="#000" stroke-width="2.13" stroke-linejoin="round" stroke-linecap="round"/>
<polyline points="2614.6,1700.3 2616.3,1700.3" fill="none" stroke="#000" stroke-width="2.13" stroke-linejoin="round" stroke-linecap="round"/>
<polyline points="2592.7,1709.5 2594.4,1709.5" fill="none" stroke="#000" stroke-width="2.13" stroke-linejoin="round" stroke-linecap="round"/>
<polyline points="2604.5,1712.1 2606.2,1712.1" fill="none" stroke="#000" stroke-width="2.13" stroke-linejoin="round" stroke-linecap="round"/>
<polyline points="2595.2,1721.4 2596.9,1721.4" fill="none" stroke="#000" stroke-width="2.13" stroke-linejoin="round" stroke-linecap="round"/>
<polyline points="2573.3,1723.0 2575.0,1723.0" fill="none" stroke="#000" stroke-width="2.13" stroke-linejoin="round" stroke-linecap="round"/>
<polyline points="2585.1,1727.3 2586.8,1727.3" fill="none" stroke="#000" stroke-width="2.13" stroke-linejoin="round" stroke-linecap="round"/>
<polyline points="2575.8,1736.5 2577.5,1736.5" fill="none" stroke="#000" stroke-width="2.13" stroke-linejoin="round" stroke-linecap="round"/>
<polyline points="2451.0,1717.9 2476.4,1756.7 2488.4,1789.6 2521.2,1819.4 2539.1,1849.3 2557.0,1879.1 2569.0,1885.1 2583.9,1909.0" fill="none" stroke="#000" stroke-width="2.46" stroke-linejoin="round" stroke-linecap="round"/>
<polyline points="2488.4,1783.6 2497.3,1792.5" fill="none" stroke="#000" stroke-width="4.10" stroke-linejoin="round" stroke-linecap="round"/>
<polyline points="2551.0,1789.6 2618.2,1885.1 2621.2,1895.5 2601.8,1907.5 2583.9,1909.0" fill="none" stroke="#000" stroke-width="2.46" stroke-linejoin="round" stroke-linecap="round"/>
<polyline points="2670.4,1700.0 2551.0,1788.1" fill="none" stroke="#000" stroke-width="2.62" stroke-linejoin="round" stroke-linecap="round"/>
<polyline points="1808.0,925.4 1875.1,878.6" fill="none" stroke="#000" stroke-width="2.62" stroke-linejoin="round" stroke-linecap="round"/>
<polyline points="1862.4,883.6 1875.1,877.3" fill="none" stroke="#000" stroke-width="4.10" stroke-linejoin="round" stroke-linecap="round"/>
<polyline points="1878.9,877.3 1911.8,926.7 1942.2,973.5 1929.5,985.0" fill="none" stroke="#000" stroke-width="2.62" stroke-linejoin="round" stroke-linecap="round"/>
<polyline points="1904.2,911.5 1914.3,929.2" fill="none" stroke="#000" stroke-width="5.74" stroke-linejoin="round" stroke-linecap="round"/>
<polyline points="1758.7,954.5 1765.0,952.0" fill="none" stroke="#000" stroke-width="2.46" stroke-linejoin="round" stroke-linecap="round"/>
<polyline points="1728.3,857.1 1741.0,850.7" fill="none" stroke="#000" stroke-width="2.46" stroke-linejoin="round" stroke-linecap="round"/>
<polyline points="1715.7,883.0 1725.8,881.1" fill="none" stroke="#000" stroke-width="2.46" stroke-linejoin="round" stroke-linecap="round"/>
<polyline points="1730.9,908.9 1735.9,910.2" fill="none" stroke="#000" stroke-width="2.46" stroke-linejoin="round" stroke-linecap="round"/>
<polyline points="1748.6,868.4 1750.5,871.0" fill="none" stroke="#000" stroke-width="3.28" stroke-linejoin="round" stroke-linecap="round"/>
<polyline points="1791.6,855.2 1794.1,857.1" fill="none" stroke="#000" stroke-width="3.28" stroke-linejoin="round" stroke-linecap="round"/>
<polyline points="1816.9,830.5 1818.2,836.8" fill="none" stroke="#000" stroke-width="2.46" stroke-linejoin="round" stroke-linecap="round"/>
<polyline points="1799.2,810.2 1803.0,812.8" fill="none" stroke="#000" stroke-width="3.28" stroke-linejoin="round" stroke-linecap="round"/>
<polyline points="1791.6,817.8 1795.4,818.5" fill="none" stroke="#000" stroke-width="3.28" stroke-linejoin="round" stroke-linecap="round"/>
<polyline points="1796.7,826.7 1799.2,828.0" fill="none" stroke="#000" stroke-width="3.28" stroke-linejoin="round" stroke-linecap="round"/>
<polyline points="1854.2,890.0 1856.1,891.2" fill="none" stroke="#000" stroke-width="3.28" stroke-linejoin="round" stroke-linecap="round"/>
<polyline points="1907.4,798.9 1909.3,799.9" fill="none" stroke="#000" stroke-width="2.46" stroke-linejoin="round" stroke-linecap="round"/>
<polyline points="1757.4,908.3 1767.5,908.3 1767.5,913.4 1757.4,913.4 1757.4,908.3" fill="none" stroke="#000" stroke-width="2.46" stroke-linejoin="round" stroke-linecap="round"/>
<polyline points="1767.5,917.2 1797.9,917.2 1797.9,922.2 1767.5,922.2 1767.5,917.2" fill="none" stroke="#000" stroke-width="3.28" stroke-linejoin="round" stroke-linecap="round"/>
<polygon points="1757.7,908.6 1767.3,908.6 1767.3,913.1 1757.7,913.1" fill="#000"/>
<polygon points="1767.8,917.4 1797.7,917.4 1797.7,922.0 1767.8,922.0" fill="#000"/>
</g>
<path d="M1632.5,778.8L1617.3,1047.2M1632.5,778.8L1910.0,781.2M1631.0,805.6L1909.0,808.1M1629.5,832.5L1908.1,835.0M1715.8,779.5L1702.2,1048.1M1627.9,859.3L1907.1,861.9M1626.4,886.2L1906.1,888.8M1771.2,780.0L1758.8,1048.7M1624.9,913.0L1905.2,915.6M1799.0,780.2L1787.1,1048.9M1623.4,939.8L1904.2,942.5M1826.8,780.5L1815.4,1049.2M1621.9,966.7L1903.2,969.4M1854.5,780.7L1843.7,1049.5M1620.3,993.5L1902.2,996.3M1882.2,781.0L1872.0,1049.8M1618.8,1020.4L1901.3,1023.2M1910.0,781.2L1900.3,1050.1M1617.3,1047.2L1900.3,1050.1" fill="none" stroke="#4089f5" stroke-width="1.5" stroke-opacity="0.88"/>
<path d="M1660.2,779.0L1645.6,1047.5M1688.0,779.3L1673.9,1047.8M1743.5,779.8L1730.5,1048.4" fill="none" stroke="#3f8bf6" stroke-width="1.1" stroke-opacity="0.55"/>
<polyline points="1720.7,863.4 1738.4,849.5 1756.2,840.6 1773.9,828.6 1792.9,830.5" fill="none" stroke="#e84a24" stroke-width="7.5" stroke-linecap="round" stroke-linejoin="round"/>
<polyline points="1780.2,833.0 1786.5,839.3 1790.3,838.7" fill="none" stroke="#e84a24" stroke-width="6" stroke-linecap="round" stroke-linejoin="round"/>
<polyline points="1801.7,819.7 1815.6,813.4" fill="none" stroke="#e84a24" stroke-width="6" stroke-linecap="round" stroke-linejoin="round"/>
<circle cx="1816.9" cy="807.7" r="3.6" fill="#e84a24"/>
<circle cx="1768.2" cy="853.9" r="5" fill="#e84a24"/>
<circle cx="1767.5" cy="859.6" r="4.4" fill="#e84a24"/>
<circle cx="1796.9" cy="860.4" r="3.6" fill="#e84a24"/>
<circle cx="1767.5" cy="872.9" r="4.6" fill="#e83422"/>
<circle cx="1770.3" cy="877.6" r="3.8" fill="#e83422"/>
<circle cx="1794.1" cy="873.0" r="3.2" fill="#e83422"/>
<circle cx="1790.3" cy="887.4" r="5" fill="#e83422"/>
<circle cx="1787.8" cy="890.6" r="3.5" fill="#e83422"/>
<circle cx="1722.6" cy="864.7" r="5.5" fill="#e84a24"/>
<circle cx="1730.9" cy="877.3" r="5" fill="#e83422"/>
<polyline points="1703.0,878.6 1713.1,890.0 1725.8,897.5" fill="none" stroke="#e84a24" stroke-width="7" stroke-linecap="round" stroke-linejoin="round"/>
<polyline points="1713.1,893.8 1730.9,902.6" fill="none" stroke="#e83422" stroke-width="6" stroke-linecap="round" stroke-linejoin="round"/>
<polyline points="1735.9,884.9 1747.3,895.0" fill="none" stroke="#e83422" stroke-width="7" stroke-linecap="round" stroke-linejoin="round"/>
<polyline points="1728.3,891.2 1741.0,897.5" fill="none" stroke="#e83422" stroke-width="6" stroke-linecap="round" stroke-linejoin="round"/>
<polyline points="1751.1,885.5 1761.2,893.8 1772.6,901.3" fill="none" stroke="#e83422" stroke-width="7" stroke-linecap="round" stroke-linejoin="round"/>
<polyline points="1735.9,907.0 1767.5,947.5 1805.5,926.0" fill="none" stroke="#e83422" stroke-width="7.6" stroke-linecap="round" stroke-linejoin="round"/>
<polygon points="1786.0,919.0 1812.0,928.2 1860.0,945.2 2040.0,1008.8 2260.0,1086.6 2560.0,1192.7 2779.0,1270.1 2779.0,1273.1 2560.0,1195.9 2260.0,1090.4 2040.0,1013.2 1860.0,950.1 1812.0,933.4 1786.0,919.6" fill="#ffff48"/>
<polygon points="2779.0,1270.1 2838.0,1291.9 2838.0,1294.5 2779.0,1276.1" fill="#ffff48"/>
<path d="M1765,913.5 L1787,919.9" stroke="#e8e83c" stroke-width="1.2" fill="none"/>
<text x="2838.5" y="1294.6" font-family="Liberation Sans, sans-serif" font-size="5.6" fill="#e8e8e8">odom</text>
<text x="1768.5" y="921.3" font-family="Liberation Sans, sans-serif" font-size="4.6" fill="#e8e8e8" textLength="28">base_link</text>
<text x="1758" y="912.4" font-family="Liberation Sans, sans-serif" font-size="4.2" fill="#e8e8e8" textLength="9">map</text>
<circle cx="3456" cy="193.7" r="6.6" fill="none" stroke="#fff" stroke-width="5.2"/>
<rect x="3452.7" y="182.29999999999998" width="6.6" height="5" rx="1" fill="#fff" transform="rotate(0 3456 193.7)"/>
<rect x="3452.7" y="182.29999999999998" width="6.6" height="5" rx="1" fill="#fff" transform="rotate(60 3456 193.7)"/>
<rect x="3452.7" y="182.29999999999998" width="6.6" height="5" rx="1" fill="#fff" transform="rotate(120 3456 193.7)"/>
<rect x="3452.7" y="182.29999999999998" width="6.6" height="5" rx="1" fill="#fff" transform="rotate(180 3456 193.7)"/>
<rect x="3452.7" y="182.29999999999998" width="6.6" height="5" rx="1" fill="#fff" transform="rotate(240 3456 193.7)"/>
<rect x="3452.7" y="182.29999999999998" width="6.6" height="5" rx="1" fill="#fff" transform="rotate(300 3456 193.7)"/>
<circle cx="3500" cy="186.39999999999998" r="2.5" fill="#fff"/><circle cx="3500" cy="193.7" r="2.5" fill="#fff"/><circle cx="3500" cy="201.0" r="2.5" fill="#fff"/>
<rect x="3452" y="244" width="60" height="60" rx="4" fill="#27272b"/>
<rect x="3452" y="324" width="60" height="120" rx="4" fill="#27272b"/>
<rect x="3452" y="464" width="60" height="60" rx="4" fill="#27272b"/>
<path d="M3472.5,259.5 L3497.5,277.5 L3482,279.8 L3473.8,289.5 Z" fill="none" stroke="#e1e1e4" stroke-width="1.8" stroke-linejoin="round"/>
<g transform="translate(3482,414) rotate(-33)" fill="none" stroke="#e1e1e4" stroke-width="1.9" stroke-linejoin="round"><rect x="-15.5" y="-6.6" width="31" height="13.2" rx="1.5"/><path d="M-10,-6.6 v4.4 M-5,-6.6 v6.2 M0,-6.6 v4.4 M5,-6.6 v6.2 M10,-6.6 v4.4"/></g>
<rect x="3474" y="486" width="16" height="16" rx="4" fill="#e1e1e4"/>
<g fill="none" stroke="#e1e1e4" stroke-width="1.9" stroke-linecap="round" stroke-linejoin="round"><path d="M3476.5,480.5 L3482,476 L3487.5,480.5"/><path d="M3476.5,507.5 L3482,512 L3487.5,507.5"/><path d="M3468.5,488.5 L3464.2,494 L3468.5,499.5"/><path d="M3495.5,488.5 L3499.8,494 L3495.5,499.5"/></g>
<circle cx="156" cy="122" r="12" fill="#ed6a5f"/>
<circle cx="196" cy="122" r="12" fill="#f5bf4f"/>
<circle cx="236" cy="122" r="12" fill="#61c554"/>
<defs><linearGradient id="lg" x1="0" y1="0" x2="0" y2="1"><stop offset="0" stop-color="#6f5ff6"/><stop offset="1" stop-color="#5f48ef"/></linearGradient></defs><rect x="288" y="96" width="48" height="48" rx="10.5" fill="url(#lg)"/>
<g transform="translate(312,120) rotate(0)"><path d="M-3.1,-19.1 L3.1,-15.9 L3.1,19.1 L-3.1,15.9 Z" fill="#fff"/></g>
<g transform="translate(312,120) rotate(60)"><path d="M3.1,-19.1 L-3.1,-15.9 L-3.1,19.1 L3.1,15.9 Z" fill="#fff"/></g>
<g transform="translate(312,120) rotate(120)"><path d="M-3.1,-19.1 L3.1,-15.9 L3.1,19.1 L-3.1,15.9 Z" fill="#fff"/></g>
<polygon points="312.00,115.90 315.55,117.95 315.55,122.05 312.00,124.10 308.45,122.05 308.45,117.95" fill="#6552f1"/>
<path d="M348,117.5 L356,125.3 L364,117.5" fill="none" stroke="#fff" stroke-width="2.2"/>
<path d="M2983.8,117.5 L2991.8,125.5 L2999.8,117.5" fill="none" stroke="#fff" stroke-width="2.2"/>
<rect x="2819.2" y="107.7" width="25.6" height="25.6" rx="5.5" fill="none" stroke="#fff" stroke-width="2.4"/>
<path d="M2831.5,108 V133 M2819.5,113.4 H2831.5 M2831.5,125 H2844.5" stroke="#fff" stroke-width="2" fill="none"/>
<circle cx="2843.8" cy="107.9" r="7.4" fill="#202024"/>
<circle cx="2843.8" cy="107.9" r="5.2" fill="#9480ed"/>
<rect x="3053.3" y="105.9" width="37.2" height="28.6" rx="5.5" fill="none" stroke="#fff" stroke-width="3"/>
<circle cx="3083" cy="131" r="13" fill="#202024"/>
<circle cx="3083" cy="131" r="10.8" fill="#fff"/>
<path d="M3076.5,131 H3089.5 M3083,124.5 V137.5" stroke="#202024" stroke-width="2.2"/>
<rect x="3141.3" y="105.9" width="37.2" height="28.6" rx="5.5" fill="none" stroke="#fff" stroke-width="3"/>
<path d="M3146,105 H3155 V135.5 H3146 Q3140.5,135.5 3140.5,130 V110.5 Q3140.5,105 3146,105Z" fill="#fff"/>
<rect x="3229.5" y="105.9" width="37.2" height="28.6" rx="5.5" fill="none" stroke="#fff" stroke-width="3"/>
<path d="M3254.4,106 V134.5" stroke="#fff" stroke-width="2.6"/>
<g fill="none" stroke="#fff" stroke-width="2.2"><circle cx="3336" cy="120" r="15"/><ellipse cx="3336" cy="120" rx="6.8" ry="15"/><path d="M3322.5,113.5 H3349.5 M3322.5,126.5 H3349.5"/></g>
<circle cx="3345" cy="129" r="10.6" fill="#202024"/>
<circle cx="3345" cy="129" r="8.6" fill="#fff"/>
<path d="M3344.6,124 V129.6 H3349" stroke="#202024" stroke-width="2" fill="none"/>
<rect x="3460" y="92" width="56" height="56" rx="4" fill="#38383c"/>
<circle cx="3488" cy="113" r="7.2" fill="#fff"/>
<path d="M3473.8,134 V130.5 C3473.8,125.5 3483,123 3488,123 C3493,123 3502.2,125.5 3502.2,130.5 V134Z" fill="#fff"/>
<path d="M128.1,474.3 L144.9,474.3 L136.5,482.7Z" fill="#e1e1e4"/>
<path d="M132.8,682.2 L141.2,690.5 L132.8,698.8Z" fill="#e1e1e4"/>
<path d="M132.8,754.2 L141.2,762.5 L132.8,770.8Z" fill="#e1e1e4"/>
<path d="M128.1,830.8 L144.9,830.8 L136.5,839.2Z" fill="#e1e1e4"/>
<path d="M128.1,1743.3 L144.9,1743.3 L136.5,1751.7Z" fill="#e1e1e4"/>
<circle cx="843" cy="681.9" r="2.7" fill="#ffffff"/><circle cx="843" cy="690.5" r="2.7" fill="#ffffff"/><circle cx="843" cy="699.1" r="2.7" fill="#ffffff"/>
<circle cx="843" cy="753.9" r="2.7" fill="#ffffff"/><circle cx="843" cy="762.5" r="2.7" fill="#ffffff"/><circle cx="843" cy="771.1" r="2.7" fill="#ffffff"/>
<circle cx="843" cy="825.9" r="2.7" fill="#ffffff"/><circle cx="843" cy="834.5" r="2.7" fill="#ffffff"/><circle cx="843" cy="843.1" r="2.7" fill="#ffffff"/>
<circle cx="843" cy="1738.4" r="2.7" fill="#ffffff"/><circle cx="843" cy="1747.0" r="2.7" fill="#ffffff"/><circle cx="843" cy="1755.6" r="2.7" fill="#ffffff"/>
<circle cx="843.2" cy="252.6" r="2.7" fill="#ffffff"/><circle cx="843.2" cy="261.2" r="2.7" fill="#ffffff"/><circle cx="843.2" cy="269.8" r="2.7" fill="#ffffff"/>
<path d="M164.8,897.2 L173.2,905.5 L164.8,913.8Z" fill="#e1e1e4"/>
<path d="M164.8,967.2 L173.2,975.5 L164.8,983.8Z" fill="#e1e1e4"/>
<path d="M164.8,1037.2 L173.2,1045.5 L164.8,1053.8Z" fill="#e1e1e4"/>
<path d="M164.8,1107.2 L173.2,1115.5 L164.8,1123.8Z" fill="#e1e1e4"/>
<path d="M164.8,1177.2 L173.2,1185.5 L164.8,1193.8Z" fill="#8a8a92"/>
<g fill="none" stroke="#8a8a92" stroke-width="2" stroke-linecap="round"><path d="M829.5,1182.0 Q843.5,1194.0 857.5,1182.0"/><path d="M833.0,1186.0 L829.5,1190.0"/><path d="M854.0,1186.0 L857.5,1190.0"/><path d="M839.5,1189.5 L838.0,1194.5"/><path d="M847.5,1189.5 L849.0,1194.5"/></g>
<path d="M164.8,1247.2 L173.2,1255.5 L164.8,1263.8Z" fill="#8a8a92"/>
<g fill="none" stroke="#8a8a92" stroke-width="2" stroke-linecap="round"><path d="M829.5,1252.0 Q843.5,1264.0 857.5,1252.0"/><path d="M833.0,1256.0 L829.5,1260.0"/><path d="M854.0,1256.0 L857.5,1260.0"/><path d="M839.5,1259.5 L838.0,1264.5"/><path d="M847.5,1259.5 L849.0,1264.5"/></g>
<path d="M164.8,1317.2 L173.2,1325.5 L164.8,1333.8Z" fill="#8a8a92"/>
<g fill="none" stroke="#8a8a92" stroke-width="2" stroke-linecap="round"><path d="M829.5,1322.0 Q843.5,1334.0 857.5,1322.0"/><path d="M833.0,1326.0 L829.5,1330.0"/><path d="M854.0,1326.0 L857.5,1330.0"/><path d="M839.5,1329.5 L838.0,1334.5"/><path d="M847.5,1329.5 L849.0,1334.5"/></g>
<path d="M164.8,1387.2 L173.2,1395.5 L164.8,1403.8Z" fill="#8a8a92"/>
<g fill="none" stroke="#8a8a92" stroke-width="2" stroke-linecap="round"><path d="M829.5,1392.0 Q843.5,1404.0 857.5,1392.0"/><path d="M833.0,1396.0 L829.5,1400.0"/><path d="M854.0,1396.0 L857.5,1400.0"/><path d="M839.5,1399.5 L838.0,1404.5"/><path d="M847.5,1399.5 L849.0,1404.5"/></g>
<path d="M164.8,1457.2 L173.2,1465.5 L164.8,1473.8Z" fill="#8a8a92"/>
<g fill="none" stroke="#8a8a92" stroke-width="2" stroke-linecap="round"><path d="M829.5,1462.0 Q843.5,1474.0 857.5,1462.0"/><path d="M833.0,1466.0 L829.5,1470.0"/><path d="M854.0,1466.0 L857.5,1470.0"/><path d="M839.5,1469.5 L838.0,1474.5"/><path d="M847.5,1469.5 L849.0,1474.5"/></g>
<path d="M164.8,1527.2 L173.2,1535.5 L164.8,1543.8Z" fill="#8a8a92"/>
<g fill="none" stroke="#8a8a92" stroke-width="2" stroke-linecap="round"><path d="M829.5,1532.0 Q843.5,1544.0 857.5,1532.0"/><path d="M833.0,1536.0 L829.5,1540.0"/><path d="M854.0,1536.0 L857.5,1540.0"/><path d="M839.5,1539.5 L838.0,1544.5"/><path d="M847.5,1539.5 L849.0,1544.5"/></g>
<path d="M164.8,1597.2 L173.2,1605.5 L164.8,1613.8Z" fill="#8a8a92"/>
<g fill="none" stroke="#8a8a92" stroke-width="2" stroke-linecap="round"><path d="M829.5,1602.0 Q843.5,1614.0 857.5,1602.0"/><path d="M833.0,1606.0 L829.5,1610.0"/><path d="M854.0,1606.0 L857.5,1610.0"/><path d="M839.5,1609.5 L838.0,1614.5"/><path d="M847.5,1609.5 L849.0,1614.5"/></g>
<path d="M164.8,1667.2 L173.2,1675.5 L164.8,1683.8Z" fill="#8a8a92"/>
<g fill="none" stroke="#8a8a92" stroke-width="2" stroke-linecap="round"><path d="M829.5,1672.0 Q843.5,1684.0 857.5,1672.0"/><path d="M833.0,1676.0 L829.5,1680.0"/><path d="M854.0,1676.0 L857.5,1680.0"/><path d="M839.5,1679.5 L838.0,1684.5"/><path d="M847.5,1679.5 L849.0,1684.5"/></g>
<path d="M164.8,1880.2 L173.2,1888.5 L164.8,1896.8Z" fill="#8a8a92"/>
<g fill="none" stroke="#8a8a92" stroke-width="2" stroke-linecap="round"><path d="M829.5,1885.0 Q843.5,1897.0 857.5,1885.0"/><path d="M833.0,1889.0 L829.5,1893.0"/><path d="M854.0,1889.0 L857.5,1893.0"/><path d="M839.5,1892.5 L838.0,1897.5"/><path d="M847.5,1892.5 L849.0,1897.5"/></g>
<path d="M190.5,1876.5 Q205.5,1881.0 220.5,1876.5 V1899.5 Q205.5,1895.0 190.5,1899.5Z" fill="#8a8a92"/>
<path d="M196.5,1893.0 l6,-8 l4,5.2 l3,-3.6 l5.5,6.4Z" fill="#27272b"/>
<path d="M164.8,1950.2 L173.2,1958.5 L164.8,1966.8Z" fill="#8a8a92"/>
<g fill="none" stroke="#8a8a92" stroke-width="2" stroke-linecap="round"><path d="M829.5,1955.0 Q843.5,1967.0 857.5,1955.0"/><path d="M833.0,1959.0 L829.5,1963.0"/><path d="M854.0,1959.0 L857.5,1963.0"/><path d="M839.5,1962.5 L838.0,1967.5"/><path d="M847.5,1962.5 L849.0,1967.5"/></g>
<path d="M194,1943 h14.5 l0.8,3.2 h8.2 v15.5 h-11 l-0.8,-3.2 h-8.2 v11.5 h-3.5 Z" fill="#8a8a92"/>
<path d="M164.8,2020.2 L173.2,2028.5 L164.8,2036.8Z" fill="#e1e1e4"/>
<rect x="190.5" y="2016.5" width="30" height="9" fill="#c8c8cc"/>
<rect x="190.5" y="2029.5" width="9" height="10" fill="#c8c8cc"/>
<rect x="203.5" y="2029.5" width="17" height="10" fill="#c8c8cc"/>
<path d="M164.8,2090.2 L173.2,2098.5 L164.8,2106.8Z" fill="#8a8a92"/>
<g fill="none" stroke="#8a8a92" stroke-width="2" stroke-linecap="round"><path d="M829.5,2095.0 Q843.5,2107.0 857.5,2095.0"/><path d="M833.0,2099.0 L829.5,2103.0"/><path d="M854.0,2099.0 L857.5,2103.0"/><path d="M839.5,2102.5 L838.0,2107.5"/><path d="M847.5,2102.5 L849.0,2107.5"/></g>
<path d="M194,2083 h14.5 l0.8,3.2 h8.2 v15.5 h-11 l-0.8,-3.2 h-8.2 v11.5 h-3.5 Z" fill="#8a8a92"/>
<path d="M164.8,2160.2 L173.2,2168.5 L164.8,2176.8Z" fill="#8a8a92"/>
<g fill="none" stroke="#8a8a92" stroke-width="2" stroke-linecap="round"><path d="M829.5,2165.0 Q843.5,2177.0 857.5,2165.0"/><path d="M833.0,2169.0 L829.5,2173.0"/><path d="M854.0,2169.0 L857.5,2173.0"/><path d="M839.5,2172.5 L838.0,2177.5"/><path d="M847.5,2172.5 L849.0,2177.5"/></g>
<path d="M194,2153 h14.5 l0.8,3.2 h8.2 v15.5 h-11 l-0.8,-3.2 h-8.2 v11.5 h-3.5 Z" fill="#8a8a92"/>
<path d="M827.6,546.3 L844.4,546.3 L836,554.7Z" fill="#ffffff"/>
<path d="M827.6,608.3 L844.4,608.3 L836,616.7Z" fill="#ffffff"/>
<path d="M827.6,1815.8 L844.4,1815.8 L836,1824.2Z" fill="#ffffff"/>
<path d="M852.5,186.5 L868.5,202.5 M868.5,186.5 L852.5,202.5" stroke="#a7a6af" stroke-width="2.6" fill="none"/>
<circle cx="788.2" cy="261.1" r="12.8" fill="none" stroke="#fff" stroke-width="3.1"/>
<path d="M783.3,257.6 a5,5 0 1 1 7.9,4.1 c-2.1,1.5 -2.9,2.3 -2.9,4.6" fill="none" stroke="#fff" stroke-width="3"/>
<rect x="786.6" y="267.8" width="3.2" height="3.2" fill="#fff"/>
<circle cx="149" cy="331" r="8.2" fill="none" stroke="#d6d6da" stroke-width="3"/>
<path d="M155,337.2 L164.4,346.6" stroke="#d6d6da" stroke-width="3.2" fill="none"/>
</g>
<text x="3482" y="360.5" font-family="Liberation Sans, sans-serif" font-size="19" font-weight="700" fill="#53b5e6" text-anchor="middle">3D</text>
</svg>
<div id="txt" style="position:absolute;left:0;top:0;width:3644px;height:2360px;will-change:transform">
<div class="t" id="t0" style="left:1572.0px;top:99.0px;font-size:26px;font-weight:400;color:#ffffff;letter-spacing:0.576px">ws://orin12:8765 / 2025-11-20 10:07:55.492 AM CST</div>
<div class="t" id="t1" style="left:2860.6px;top:99.5px;font-size:24px;font-weight:400;color:#ffffff;letter-spacing:0.531px">Default</div>
<div class="t" id="t2" style="left:3372.5px;top:99.5px;font-size:24px;font-weight:700;color:#ffffff;letter-spacing:-0.200px;-webkit-text-stroke:0.1px currentColor">CST</div>
<div class="t" id="t3" style="left:132.0px;top:173.5px;font-size:22px;font-weight:700;color:#e1e1e4;letter-spacing:-0.290px;-webkit-text-stroke:0.1px currentColor">Panel</div>
<div class="t" id="t4" style="left:222.3px;top:173.5px;font-size:22px;font-weight:700;color:#a7a6af;letter-spacing:-0.248px;-webkit-text-stroke:0.1px currentColor">Topics</div>
<div class="t" id="t5" style="left:322.6px;top:173.5px;font-size:22px;font-weight:700;color:#a7a6af;letter-spacing:-0.382px;-webkit-text-stroke:0.1px currentColor">Problems</div>
<div class="t" id="t6" style="left:907.4px;top:174.0px;font-size:24px;font-weight:400;color:#a7a6af;letter-spacing:-1.125px">3D</div>
<div class="t" id="t7" style="left:125.5px;top:241.0px;font-size:24px;font-weight:700;color:#e1e1e4;letter-spacing:0.049px;-webkit-text-stroke:0.1px currentColor">3D panel</div>
<div class="t" id="t8" style="left:187.4px;top:315.5px;font-size:24px;font-weight:400;color:#9b9ba3;letter-spacing:0.497px">Search panel settings...</div>
<div class="t" id="t9" style="left:362.2px;top:389.0px;font-size:24px;font-weight:400;color:#a7a6af;letter-spacing:1.055px">Title</div>
<div class="t" id="t10" style="left:445.2px;top:390.0px;font-size:24px;font-weight:400;color:#85858c;letter-spacing:-1.125px">3D</div>
<div class="t" id="t11" style="left:156.0px;top:458.0px;font-size:24px;font-weight:700;color:#e1e1e4;letter-spacing:-0.010px;-webkit-text-stroke:0.1px currentColor">Frame</div>
<div class="t" id="t12" style="left:255.2px;top:529.5px;font-size:24px;font-weight:400;color:#a7a6af;letter-spacing:0.743px">Display frame</div>
<div class="t" id="t13" style="left:444.1px;top:530.0px;font-size:24px;font-weight:400;color:#e1e1e4;letter-spacing:0.605px">map</div>
<div class="t" id="t14" style="left:267.7px;top:592.0px;font-size:24px;font-weight:400;color:#a7a6af;letter-spacing:0.699px">Follow mode</div>
<div class="t" id="t15" style="left:444.0px;top:592.5px;font-size:24px;font-weight:400;color:#e1e1e4;letter-spacing:0.313px">Pose</div>
<div class="t" id="t16" style="left:156.3px;top:670.5px;font-size:24px;font-weight:700;color:#e1e1e4;letter-spacing:0.263px;-webkit-text-stroke:0.1px currentColor">Scene</div>
<div class="t" id="t17" style="left:156.3px;top:742.5px;font-size:24px;font-weight:700;color:#e1e1e4;letter-spacing:0.781px;-webkit-text-stroke:0.1px currentColor">View</div>
<div class="t" id="t18" style="left:156.3px;top:814.0px;font-size:24px;font-weight:700;color:#e1e1e4;letter-spacing:0.660px;-webkit-text-stroke:0.1px currentColor">Transforms (11)</div>
<div class="t" id="t19" style="left:188.4px;top:885.0px;font-size:24px;font-weight:400;color:#e1e1e4;letter-spacing:0.811px">Settings</div>
<div class="t" id="t20" style="left:188.4px;top:955.0px;font-size:24px;font-weight:400;color:#e1e1e4;letter-spacing:0.605px">map</div>
<div class="t" id="t21" style="left:202.2px;top:1025.0px;font-size:24px;font-weight:400;color:#e1e1e4;letter-spacing:0.844px">odom</div>
<div class="t" id="t22" style="left:215.9px;top:1095.0px;font-size:24px;font-weight:400;color:#e1e1e4;letter-spacing:0.235px">base_link</div>
<div class="t" id="t23" style="left:228.8px;top:1165.0px;font-size:24px;font-weight:400;color:#85858c;letter-spacing:1.329px">body</div>
<div class="t" id="t24" style="left:228.8px;top:1235.0px;font-size:24px;font-weight:400;color:#85858c;letter-spacing:0.458px">camera_frame</div>
<div class="t" id="t25" style="left:228.8px;top:1305.0px;font-size:24px;font-weight:400;color:#85858c;letter-spacing:0.838px">hokuyo</div>
<div class="t" id="t26" style="left:242.0px;top:1375.0px;font-size:24px;font-weight:400;color:#85858c;letter-spacing:0.504px">laser</div>
<div class="t" id="t27" style="left:228.8px;top:1445.0px;font-size:24px;font-weight:400;color:#85858c;letter-spacing:0.622px">wheel_bl</div>
<div class="t" id="t28" style="left:228.8px;top:1515.0px;font-size:24px;font-weight:400;color:#85858c;letter-spacing:0.639px">wheel_br</div>
<div class="t" id="t29" style="left:228.8px;top:1585.0px;font-size:24px;font-weight:400;color:#85858c;letter-spacing:0.658px">wheel_fl</div>
<div class="t" id="t30" style="left:228.8px;top:1655.0px;font-size:24px;font-weight:400;color:#85858c;letter-spacing:0.677px">wheel_fr</div>
<div class="t" id="t31" style="left:156.4px;top:1727.0px;font-size:24px;font-weight:700;color:#e1e1e4;letter-spacing:0.080px;-webkit-text-stroke:0.1px currentColor">Topics</div>
<div class="t" id="t32" style="left:313.7px;top:1799.0px;font-size:24px;font-weight:400;color:#a7a6af;letter-spacing:0.805px">Filter list</div>
<div class="t" id="t33" style="left:444.3px;top:1799.5px;font-size:24px;font-weight:400;color:#e1e1e4;letter-spacing:0.463px">List all</div>
<div class="t" id="t34" style="left:230.6px;top:1868.0px;font-size:24px;font-weight:400;color:#85858c;letter-spacing:0.651px">/camera_0/image_raw</div>
<div class="t" id="t35" style="left:230.6px;top:1938.0px;font-size:24px;font-weight:400;color:#85858c;letter-spacing:0.773px">/initialpose</div>
<div class="t" id="t36" style="left:230.6px;top:2008.0px;font-size:24px;font-weight:400;color:#e1e1e4;letter-spacing:0.869px">/map</div>
<div class="t" id="t37" style="left:230.6px;top:2078.0px;font-size:24px;font-weight:400;color:#85858c;letter-spacing:0.479px">/move_base_simple/goal</div>
<div class="t" id="t38" style="left:230.6px;top:2148.0px;font-size:24px;font-weight:400;color:#85858c;letter-spacing:0.996px">/pose</div>
</div>
<div id="rim"></div>
</body></html>
